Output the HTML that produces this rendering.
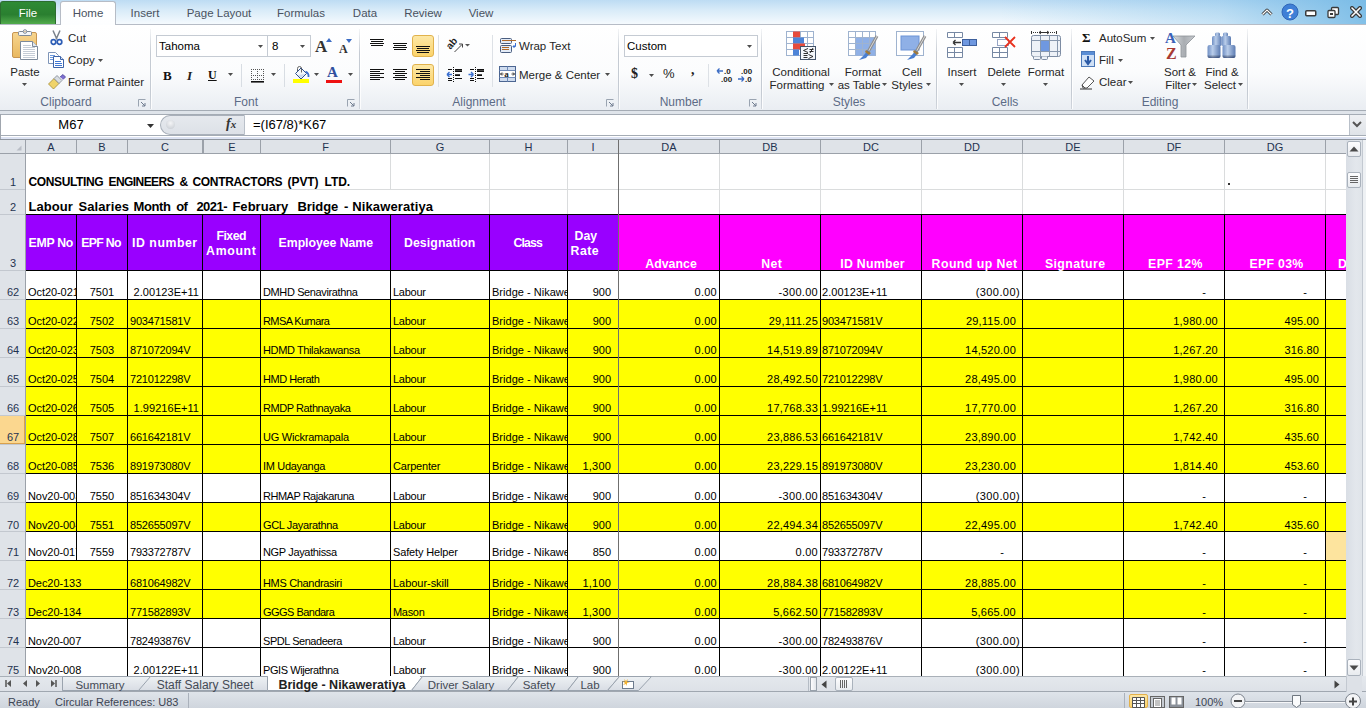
<!DOCTYPE html><html><head><meta charset="utf-8"><style>
html,body{margin:0;padding:0;width:1366px;height:708px;overflow:hidden;background:#fff;font-family:"Liberation Sans", sans-serif;}
div{position:absolute;box-sizing:border-box;}
.t{white-space:pre;}
svg{position:absolute;}

</style></head><body>
<div style="left:0px;top:0px;width:1366px;height:25px;background:linear-gradient(#bddcf3,#d8ebf8 40%,#f7fbfe)"></div>
<div style="left:1000px;top:0px;width:366px;height:24px;background:linear-gradient(90deg,rgba(120,188,232,0),rgba(120,188,232,0.35) 60%,rgba(110,182,228,0.85))"></div>
<div style="left:0px;top:1px;width:56px;height:24px;background:linear-gradient(#2e8b35,#2a7f30 55%,#56b04f);border:1px solid #2b6c2e;border-bottom:none;border-radius:3px 3px 0 0"></div>
<div class="t" style="left:0.0px;top:8px;width:56px;text-align:center;font-size:11.5px;line-height:11.5px;color:#fff;font-weight:normal;white-space:pre;">File</div>
<div style="left:0px;top:24px;width:1366px;height:1px;background:#b6bcc6"></div>
<div style="left:60px;top:1px;width:56px;height:24px;background:linear-gradient(#ffffff,#fdfeff);border:1px solid #b6bcc6;border-bottom:none;border-radius:3px 3px 0 0"></div>
<div class="t" style="left:60.0px;top:8px;width:56px;text-align:center;font-size:11.5px;line-height:11.5px;color:#4a5260;font-weight:normal;white-space:pre;">Home</div>
<div class="t" style="left:95.0px;top:8px;width:100px;text-align:center;font-size:11.5px;line-height:11.5px;color:#4a5260;font-weight:normal;white-space:pre;">Insert</div>
<div class="t" style="left:169.0px;top:8px;width:100px;text-align:center;font-size:11.5px;line-height:11.5px;color:#4a5260;font-weight:normal;white-space:pre;">Page Layout</div>
<div class="t" style="left:251.0px;top:8px;width:100px;text-align:center;font-size:11.5px;line-height:11.5px;color:#4a5260;font-weight:normal;white-space:pre;">Formulas</div>
<div class="t" style="left:315.0px;top:8px;width:100px;text-align:center;font-size:11.5px;line-height:11.5px;color:#4a5260;font-weight:normal;white-space:pre;">Data</div>
<div class="t" style="left:373.0px;top:8px;width:100px;text-align:center;font-size:11.5px;line-height:11.5px;color:#4a5260;font-weight:normal;white-space:pre;">Review</div>
<div class="t" style="left:431.0px;top:8px;width:100px;text-align:center;font-size:11.5px;line-height:11.5px;color:#4a5260;font-weight:normal;white-space:pre;">View</div>
<div style="left:0px;top:25px;width:1366px;height:86px;background:linear-gradient(#ffffff 0%,#fbfcfd 55%,#e9edf2 100%)"></div>
<div style="left:0px;top:110px;width:1366px;height:1px;background:#a5acb5"></div>
<div style="left:0px;top:111px;width:1366px;height:3px;background:#dfe4ea"></div>
<div style="left:150px;top:29px;width:1px;height:80px;background:linear-gradient(rgba(200,206,214,0.2),#c5cbd3 30%,#c5cbd3 80%,#d0d5dc)"></div>
<div style="left:151px;top:29px;width:1px;height:80px;background:rgba(255,255,255,0.8)"></div>
<div style="left:359px;top:29px;width:1px;height:80px;background:linear-gradient(rgba(200,206,214,0.2),#c5cbd3 30%,#c5cbd3 80%,#d0d5dc)"></div>
<div style="left:360px;top:29px;width:1px;height:80px;background:rgba(255,255,255,0.8)"></div>
<div style="left:618px;top:29px;width:1px;height:80px;background:linear-gradient(rgba(200,206,214,0.2),#c5cbd3 30%,#c5cbd3 80%,#d0d5dc)"></div>
<div style="left:619px;top:29px;width:1px;height:80px;background:rgba(255,255,255,0.8)"></div>
<div style="left:761px;top:29px;width:1px;height:80px;background:linear-gradient(rgba(200,206,214,0.2),#c5cbd3 30%,#c5cbd3 80%,#d0d5dc)"></div>
<div style="left:762px;top:29px;width:1px;height:80px;background:rgba(255,255,255,0.8)"></div>
<div style="left:936px;top:29px;width:1px;height:80px;background:linear-gradient(rgba(200,206,214,0.2),#c5cbd3 30%,#c5cbd3 80%,#d0d5dc)"></div>
<div style="left:937px;top:29px;width:1px;height:80px;background:rgba(255,255,255,0.8)"></div>
<div style="left:1071px;top:29px;width:1px;height:80px;background:linear-gradient(rgba(200,206,214,0.2),#c5cbd3 30%,#c5cbd3 80%,#d0d5dc)"></div>
<div style="left:1072px;top:29px;width:1px;height:80px;background:rgba(255,255,255,0.8)"></div>
<div style="left:1247px;top:29px;width:1px;height:80px;background:linear-gradient(rgba(200,206,214,0.2),#c5cbd3 30%,#c5cbd3 80%,#d0d5dc)"></div>
<div style="left:1248px;top:29px;width:1px;height:80px;background:rgba(255,255,255,0.8)"></div>
<div class="t" style="left:6.0px;top:96px;width:120px;text-align:center;font-size:12px;line-height:12px;color:#5c6b86;font-weight:normal;white-space:pre;">Clipboard</div>
<div class="t" style="left:186.0px;top:96px;width:120px;text-align:center;font-size:12px;line-height:12px;color:#5c6b86;font-weight:normal;white-space:pre;">Font</div>
<div class="t" style="left:419.0px;top:96px;width:120px;text-align:center;font-size:12px;line-height:12px;color:#5c6b86;font-weight:normal;white-space:pre;">Alignment</div>
<div class="t" style="left:621.0px;top:96px;width:120px;text-align:center;font-size:12px;line-height:12px;color:#5c6b86;font-weight:normal;white-space:pre;">Number</div>
<div class="t" style="left:789.0px;top:96px;width:120px;text-align:center;font-size:12px;line-height:12px;color:#5c6b86;font-weight:normal;white-space:pre;">Styles</div>
<div class="t" style="left:945.0px;top:96px;width:120px;text-align:center;font-size:12px;line-height:12px;color:#5c6b86;font-weight:normal;white-space:pre;">Cells</div>
<div class="t" style="left:1100.0px;top:96px;width:120px;text-align:center;font-size:12px;line-height:12px;color:#5c6b86;font-weight:normal;white-space:pre;">Editing</div>
<svg style="left:138px;top:99px" width="8" height="8"><path d="M0.5 7.5V0.5H7.5" stroke="#9aa4b1" fill="none"/><path d="M3 3L7 7M7 4V7H4" stroke="#6e7b8e" fill="none"/></svg>
<svg style="left:347px;top:99px" width="8" height="8"><path d="M0.5 7.5V0.5H7.5" stroke="#9aa4b1" fill="none"/><path d="M3 3L7 7M7 4V7H4" stroke="#6e7b8e" fill="none"/></svg>
<svg style="left:606px;top:99px" width="8" height="8"><path d="M0.5 7.5V0.5H7.5" stroke="#9aa4b1" fill="none"/><path d="M3 3L7 7M7 4V7H4" stroke="#6e7b8e" fill="none"/></svg>
<svg style="left:749px;top:99px" width="8" height="8"><path d="M0.5 7.5V0.5H7.5" stroke="#9aa4b1" fill="none"/><path d="M3 3L7 7M7 4V7H4" stroke="#6e7b8e" fill="none"/></svg>
<div class="t" style="left:-5.0px;top:67px;width:60px;text-align:center;font-size:11.5px;line-height:11.5px;color:#262626;font-weight:normal;white-space:pre;">Paste</div>
<div class="t" style="left:68px;top:33px;font-size:11.5px;line-height:11.5px;color:#262626;font-weight:normal;white-space:pre;">Cut</div>
<div class="t" style="left:68px;top:55px;font-size:11.5px;line-height:11.5px;color:#262626;font-weight:normal;white-space:pre;">Copy</div>
<div class="t" style="left:68px;top:77px;font-size:11.5px;line-height:11.5px;color:#262626;font-weight:normal;white-space:pre;">Format Painter</div>
<div style="left:156px;top:35px;width:112px;height:22px;background:#fff;border:1px solid #c5cbd3"></div>
<div style="left:267px;top:35px;width:44px;height:22px;background:#fff;border:1px solid #c5cbd3"></div>
<div class="t" style="left:159px;top:41px;font-size:11.5px;line-height:11.5px;color:#000;font-weight:normal;white-space:pre;">Tahoma</div>
<div class="t" style="left:272px;top:41px;font-size:11.5px;line-height:11.5px;color:#000;font-weight:normal;white-space:pre;">8</div>
<div style="left:624px;top:35px;width:134px;height:22px;background:#fff;border:1px solid #c5cbd3"></div>
<div class="t" style="left:627px;top:41px;font-size:11.5px;line-height:11.5px;color:#000;font-weight:normal;white-space:pre;">Custom</div>
<div class="t" style="left:519px;top:41px;font-size:11.5px;line-height:11.5px;color:#262626;font-weight:normal;white-space:pre;">Wrap Text</div>
<div class="t" style="left:519px;top:70px;font-size:11.5px;line-height:11.5px;color:#262626;font-weight:normal;white-space:pre;">Merge &amp; Center</div>
<div class="t" style="left:761.0px;top:67px;width:80px;text-align:center;font-size:11.5px;line-height:11.5px;color:#262626;font-weight:normal;white-space:pre;">Conditional</div>
<div class="t" style="left:757.0px;top:80px;width:80px;text-align:center;font-size:11.5px;line-height:11.5px;color:#262626;font-weight:normal;white-space:pre;">Formatting</div>
<div class="t" style="left:823.0px;top:67px;width:80px;text-align:center;font-size:11.5px;line-height:11.5px;color:#262626;font-weight:normal;white-space:pre;">Format</div>
<div class="t" style="left:819.0px;top:80px;width:80px;text-align:center;font-size:11.5px;line-height:11.5px;color:#262626;font-weight:normal;white-space:pre;">as Table</div>
<div class="t" style="left:872.0px;top:67px;width:80px;text-align:center;font-size:11.5px;line-height:11.5px;color:#262626;font-weight:normal;white-space:pre;">Cell</div>
<div class="t" style="left:867.0px;top:80px;width:80px;text-align:center;font-size:11.5px;line-height:11.5px;color:#262626;font-weight:normal;white-space:pre;">Styles</div>
<div class="t" style="left:932.0px;top:67px;width:60px;text-align:center;font-size:11.5px;line-height:11.5px;color:#262626;font-weight:normal;white-space:pre;">Insert</div>
<div class="t" style="left:974.0px;top:67px;width:60px;text-align:center;font-size:11.5px;line-height:11.5px;color:#262626;font-weight:normal;white-space:pre;">Delete</div>
<div class="t" style="left:1016.0px;top:67px;width:60px;text-align:center;font-size:11.5px;line-height:11.5px;color:#262626;font-weight:normal;white-space:pre;">Format</div>
<div class="t" style="left:1099px;top:33px;font-size:11.5px;line-height:11.5px;color:#262626;font-weight:normal;white-space:pre;">AutoSum</div>
<div class="t" style="left:1099px;top:55px;font-size:11.5px;line-height:11.5px;color:#262626;font-weight:normal;white-space:pre;">Fill</div>
<div class="t" style="left:1099px;top:77px;font-size:11.5px;line-height:11.5px;color:#262626;font-weight:normal;white-space:pre;">Clear</div>
<div class="t" style="left:1150.0px;top:67px;width:60px;text-align:center;font-size:11.5px;line-height:11.5px;color:#262626;font-weight:normal;white-space:pre;">Sort &amp;</div>
<div class="t" style="left:1148.0px;top:80px;width:60px;text-align:center;font-size:11.5px;line-height:11.5px;color:#262626;font-weight:normal;white-space:pre;">Filter</div>
<div class="t" style="left:1192.0px;top:67px;width:60px;text-align:center;font-size:11.5px;line-height:11.5px;color:#262626;font-weight:normal;white-space:pre;">Find &amp;</div>
<div class="t" style="left:1190.0px;top:80px;width:60px;text-align:center;font-size:11.5px;line-height:11.5px;color:#262626;font-weight:normal;white-space:pre;">Select</div>
<svg style="left:11px;top:29px" width="30" height="33" viewBox="0 0 30 33">
<defs><linearGradient id="cb" x1="0" y1="0" x2="0" y2="1"><stop offset="0" stop-color="#f7d58f"/><stop offset="1" stop-color="#e9b85f"/></linearGradient></defs>
<rect x="1.5" y="3.5" width="24" height="25" rx="1.5" fill="url(#cb)" stroke="#c79552"/>
<rect x="7.5" y="2.5" width="13" height="4" rx="1" fill="#f4f6f8" stroke="#7e8996"/>
<circle cx="14" cy="2.5" r="1.8" fill="#f4f6f8" stroke="#7e8996"/>
<circle cx="14" cy="2.5" r="0.6" fill="#c48a3a"/>
<path d="M9.5 12.5H21.5L26.5 17.5V30.5H9.5Z" fill="#fff" stroke="#7d8a9b"/>
<path d="M21.5 12.5V17.5H26.5" fill="#e3e8ee" stroke="#7d8a9b"/>
<path d="M12 16.5H20M12 18.5H24M12 20.5H24M12 22.5H24M12 24.5H24M12 26.5H24M12 28.5H24" stroke="#c5ccd6"/>
</svg>
<svg style="left:22px;top:83px" width="6" height="4"><path d="M0 0H5L2.5 3Z" fill="#4d4d4d"/></svg>
<svg style="left:50px;top:30px" width="13" height="16" viewBox="0 0 13 16">
<path d="M3 0.5L7 9.5M10 0.5L6 9.5" stroke="#7a828b" stroke-width="1.5"/>
<circle cx="3.5" cy="12" r="2.3" fill="none" stroke="#2d5db5" stroke-width="1.7"/>
<circle cx="9.5" cy="12" r="2.3" fill="none" stroke="#2d5db5" stroke-width="1.7"/>
</svg>
<svg style="left:48px;top:52px" width="17" height="16" viewBox="0 0 17 16">
<path d="M0.5 0.5H7.5L10.5 3.5V11.5H0.5Z" fill="#fff" stroke="#7e95b8"/>
<path d="M2 3.5H7M2 5.5H8M2 7.5H8" stroke="#6c98dc"/>
<path d="M5.5 4.5H12.5L15.5 7.5V15.5H5.5Z" fill="#fff" stroke="#3c63a8"/>
<path d="M12.5 4.5V7.5H15.5" fill="#dbe4f0" stroke="#3c63a8"/>
<path d="M7 9.5H13M7 11.5H14M7 13.5H14" stroke="#3f77d4"/>
</svg>
<svg style="left:98px;top:59px" width="6" height="4"><path d="M0 0H5L2.5 3Z" fill="#4d4d4d"/></svg>
<svg style="left:48px;top:74px" width="18" height="16" viewBox="0 0 18 16">
<path d="M0.5 10L6 4.5L11 9.5L5.5 15Z" fill="#efd36a" stroke="#a38a35" stroke-width="0.8"/>
<path d="M6 4.5L9 1.5L14 6.5L11 9.5Z" fill="#d8dde3" stroke="#7b838d" stroke-width="0.8"/>
<path d="M12 3L15 0.5L17.5 3L15 5.5" fill="#7d6fd0" stroke="#4d4499" stroke-width="0.8"/>
</svg>
<div class="t" style="left:315px;top:38px;font-family:'Liberation Serif',serif;font-size:17px;line-height:17px;font-weight:bold;font-style:normal;color:#333;">A</div>
<svg style="left:326px;top:38px" width="6" height="4" viewBox="0 0 6 4"><path d="M0 4H6L3 0Z" fill="#3b6cc4"/></svg>
<div class="t" style="left:339px;top:43px;font-family:'Liberation Serif',serif;font-size:12px;line-height:12px;font-weight:bold;font-style:normal;color:#333;">A</div>
<svg style="left:346px;top:39px" width="6" height="4" viewBox="0 0 6 4"><path d="M0 0H6L3 4Z" fill="#3b6cc4"/></svg>
<div class="t" style="left:163px;top:69px;font-family:'Liberation Serif',serif;font-size:13px;line-height:13px;font-weight:bold;font-style:normal;color:#111;">B</div>
<div class="t" style="left:187px;top:69px;font-family:'Liberation Serif',serif;font-size:13px;line-height:13px;font-weight:bold;font-style:italic;color:#222;">I</div>
<div class="t" style="left:208px;top:69px;font-family:'Liberation Serif',serif;font-size:12px;line-height:12px;font-weight:bold;font-style:normal;color:#111;text-decoration:underline">U</div>
<svg style="left:228px;top:73px" width="6" height="4"><path d="M0 0H5L2.5 3Z" fill="#4d4d4d"/></svg>
<div style="left:241px;top:64px;width:1px;height:23px;background:#d8dde3"></div>
<svg style="left:251px;top:69px" width="14" height="14" viewBox="0 0 14 14"><rect x="0" y="0" width="1" height="1" fill="#555"/><rect x="2" y="0" width="1" height="1" fill="#555"/><rect x="4" y="0" width="1" height="1" fill="#555"/><rect x="6" y="0" width="1" height="1" fill="#555"/><rect x="8" y="0" width="1" height="1" fill="#555"/><rect x="10" y="0" width="1" height="1" fill="#555"/><rect x="12" y="0" width="1" height="1" fill="#555"/><rect x="0" y="2" width="1" height="1" fill="#555"/><rect x="6" y="2" width="1" height="1" fill="#555"/><rect x="12" y="2" width="1" height="1" fill="#555"/><rect x="0" y="4" width="1" height="1" fill="#555"/><rect x="6" y="4" width="1" height="1" fill="#555"/><rect x="12" y="4" width="1" height="1" fill="#555"/><rect x="0" y="6" width="1" height="1" fill="#555"/><rect x="2" y="6" width="1" height="1" fill="#555"/><rect x="4" y="6" width="1" height="1" fill="#555"/><rect x="6" y="6" width="1" height="1" fill="#555"/><rect x="8" y="6" width="1" height="1" fill="#555"/><rect x="10" y="6" width="1" height="1" fill="#555"/><rect x="12" y="6" width="1" height="1" fill="#555"/><rect x="0" y="8" width="1" height="1" fill="#555"/><rect x="6" y="8" width="1" height="1" fill="#555"/><rect x="12" y="8" width="1" height="1" fill="#555"/><rect x="0" y="10" width="1" height="1" fill="#555"/><rect x="2" y="10" width="1" height="1" fill="#555"/><rect x="4" y="10" width="1" height="1" fill="#555"/><rect x="6" y="10" width="1" height="1" fill="#555"/><rect x="8" y="10" width="1" height="1" fill="#555"/><rect x="10" y="10" width="1" height="1" fill="#555"/><rect x="12" y="10" width="1" height="1" fill="#555"/><rect x="0" y="12" width="13" height="1.6" fill="#111"/></svg>
<svg style="left:271px;top:73px" width="6" height="4"><path d="M0 0H5L2.5 3Z" fill="#4d4d4d"/></svg>
<div style="left:284px;top:64px;width:1px;height:23px;background:#d8dde3"></div>
<svg style="left:292px;top:66px" width="18" height="18" viewBox="0 0 18 18"><path d="M3.5 7.5L9 2L14.5 7.5L9 13Z" fill="#f4f7fb" stroke="#2c4f8c"/><path d="M6 9L9 12L13 8Z" fill="#c9d8ee"/><path d="M9.5 6.5V2.5A2 2 0 0 0 5.5 2.5V5" stroke="#555" fill="none" stroke-width="0.9"/><path d="M13.5 5.5Q17 7 16.5 11" stroke="#3b6fd0" stroke-width="1.8" fill="none"/><rect x="1" y="13" width="16" height="4" fill="#ffff00"/></svg>
<svg style="left:314px;top:73px" width="6" height="4"><path d="M0 0H5L2.5 3Z" fill="#4d4d4d"/></svg>
<div class="t" style="left:327px;top:65px;font-family:'Liberation Serif',serif;font-size:15px;line-height:15px;font-weight:bold;font-style:normal;color:#2e4f9e;">A</div>
<div style="left:326px;top:80px;width:16px;height:3px;background:#ee1111"></div>
<svg style="left:348px;top:73px" width="6" height="4"><path d="M0 0H5L2.5 3Z" fill="#4d4d4d"/></svg>
<div style="left:412px;top:35px;width:22px;height:22px;background:linear-gradient(#fde8a6,#fbd36b);border:1px solid #e1b24c;border-radius:3px"></div>
<div style="left:412px;top:64px;width:22px;height:22px;background:linear-gradient(#fde8a6,#fbd36b);border:1px solid #e1b24c;border-radius:3px"></div>
<svg style="left:370px;top:39px" width="16" height="9" viewBox="0 0 16 9"><rect x="0" y="0" width="14" height="1" fill="#111"/><rect x="1" y="2" width="12" height="1" fill="#111"/><rect x="0" y="4" width="14" height="1" fill="#111"/><rect x="1" y="6" width="12" height="1" fill="#111"/></svg>
<svg style="left:393px;top:43px" width="16" height="9" viewBox="0 0 16 9"><rect x="0" y="0" width="14" height="1" fill="#111"/><rect x="1" y="2" width="12" height="1" fill="#111"/><rect x="0" y="4" width="14" height="1" fill="#111"/><rect x="1" y="6" width="12" height="1" fill="#111"/></svg>
<svg style="left:416px;top:46px" width="16" height="9" viewBox="0 0 16 9"><rect x="0" y="0" width="14" height="1" fill="#111"/><rect x="1" y="2" width="12" height="1" fill="#111"/><rect x="0" y="4" width="14" height="1" fill="#111"/><rect x="1" y="6" width="12" height="1" fill="#111"/></svg>
<svg style="left:370px;top:69px" width="16" height="13" viewBox="0 0 16 13"><rect x="0" y="0" width="14" height="1" fill="#111"/><rect x="0" y="2" width="10" height="1" fill="#111"/><rect x="0" y="4" width="14" height="1" fill="#111"/><rect x="0" y="6" width="10" height="1" fill="#111"/><rect x="0" y="8" width="14" height="1" fill="#111"/><rect x="0" y="10" width="10" height="1" fill="#111"/></svg>
<svg style="left:393px;top:69px" width="16" height="13" viewBox="0 0 16 13"><rect x="0" y="0" width="14" height="1" fill="#111"/><rect x="2" y="2" width="10" height="1" fill="#111"/><rect x="0" y="4" width="14" height="1" fill="#111"/><rect x="2" y="6" width="10" height="1" fill="#111"/><rect x="0" y="8" width="14" height="1" fill="#111"/><rect x="2" y="10" width="10" height="1" fill="#111"/></svg>
<svg style="left:416px;top:69px" width="16" height="13" viewBox="0 0 16 13"><rect x="0" y="0" width="14" height="1" fill="#111"/><rect x="4" y="2" width="10" height="1" fill="#111"/><rect x="0" y="4" width="14" height="1" fill="#111"/><rect x="4" y="6" width="10" height="1" fill="#111"/><rect x="0" y="8" width="14" height="1" fill="#111"/><rect x="4" y="10" width="10" height="1" fill="#111"/></svg>
<div style="left:438px;top:35px;width:1px;height:52px;background:#dde1e6"></div>
<svg style="left:446px;top:36px" width="26" height="18" viewBox="0 0 26 18"><text x="0" y="0" font-family="Liberation Sans" font-size="10" font-weight="bold" fill="#222" transform="translate(4.5 14) rotate(-50)">ab</text><path d="M8.5 16L16 8.5" stroke="#444" stroke-width="1"/><path d="M13 8H16.5V11.5" stroke="#444" fill="none"/><path d="M19 8H24L21.5 10.5Z" fill="#555"/></svg>
<svg style="left:446px;top:67px" width="18" height="16" viewBox="0 0 18 16"><path d="M7.5 0V15" stroke="#111" stroke-dasharray="1 1"/><path d="M2 2.5H6M9 2.5H16M9 4.5H16M9 8.5H14M9 11.5H16M2 11.5H6M2 13.5H6" stroke="#111"/><path d="M9 4H16M9 8H14" stroke="#111" stroke-width="1.5"/><path d="M1 7.5H6M1 7.5L3.5 5M1 7.5L3.5 10" stroke="#3a6fd0" stroke-width="1.4" fill="none"/></svg>
<svg style="left:468px;top:67px" width="18" height="16" viewBox="0 0 18 16"><path d="M7.5 0V15" stroke="#111" stroke-dasharray="1 1"/><path d="M2 2.5H6M9 2.5H16M9 4.5H16M9 8.5H14M9 11.5H16M2 11.5H6M2 13.5H6" stroke="#111"/><path d="M9 4H16M9 8H14" stroke="#111" stroke-width="1.5"/><path d="M0.5 7.5H5.5M5.5 7.5L3 5M5.5 7.5L3 10" stroke="#3a6fd0" stroke-width="1.4" fill="none"/></svg>
<div style="left:492px;top:35px;width:1px;height:52px;background:#dde1e6"></div>
<svg style="left:499px;top:37px" width="19" height="17" viewBox="0 0 19 17"><rect x="1.5" y="1.5" width="11" height="5" rx="1" fill="#e4ecf7" stroke="#4a5e80"/><rect x="1.5" y="8.5" width="11" height="7" rx="1" fill="#e4ecf7" stroke="#4a5e80"/><path d="M3 3.5H17" stroke="#b06a2a"/><path d="M3 10.5H10M3 12.5H10" stroke="#b06a2a"/><path d="M16.5 6V9.5H14M14 9.5L15.5 8M14 9.5L15.5 11" stroke="#3a6fd0" fill="none"/></svg>
<svg style="left:499px;top:66px" width="18" height="17" viewBox="0 0 18 17"><rect x="0.5" y="0.5" width="16" height="15" fill="#cfdcef" stroke="#4b6591"/><path d="M8.5 0.5V4.5M8.5 11.5V15.5M0.5 4.5H16.5M0.5 11.5H16.5" stroke="#6f8bb8"/><rect x="1" y="5" width="15" height="6" fill="#fff"/><text x="5.2" y="11" font-family="Liberation Serif" font-size="9" font-weight="bold" fill="#222">a</text><path d="M1.5 8H4.5M15.5 8H12.5M3 6.5L1.5 8L3 9.5M14 6.5L15.5 8L14 9.5" stroke="#222" stroke-width="0.9" fill="none"/></svg>
<svg style="left:605px;top:73px" width="6" height="4"><path d="M0 0H5L2.5 3Z" fill="#4d4d4d"/></svg>
<svg style="left:747px;top:45px" width="6" height="4"><path d="M0 0H5L2.5 3Z" fill="#4d4d4d"/></svg>
<svg style="left:258px;top:45px" width="6" height="4"><path d="M0 0H5L2.5 3Z" fill="#4d4d4d"/></svg>
<svg style="left:300px;top:45px" width="6" height="4"><path d="M0 0H5L2.5 3Z" fill="#4d4d4d"/></svg>
<div class="t" style="left:631px;top:67px;font-family:'Liberation Serif',serif;font-size:14px;line-height:14px;font-weight:bold;font-style:normal;color:#222;">$</div>
<svg style="left:649px;top:74px" width="6" height="4"><path d="M0 0H5L2.5 3Z" fill="#4d4d4d"/></svg>
<div class="t" style="left:663px;top:67px;font-family:'Liberation Sans',sans-serif;font-size:13px;line-height:13px;font-weight:normal;font-style:normal;color:#222;">%</div>
<div class="t" style="left:691px;top:63px;font-family:'Liberation Serif',serif;font-size:14px;line-height:14px;font-weight:bold;font-style:normal;color:#222;">,</div>
<div style="left:708px;top:64px;width:1px;height:23px;background:#dde1e6"></div>
<svg style="left:716px;top:66px" width="18" height="17" viewBox="0 0 18 17"><path d="M1 5H7M1 5L3.5 2.5M1 5L3.5 7.5" stroke="#3b6cc4" stroke-width="1.3" fill="none"/><text x="8" y="8" font-family="Liberation Sans" font-size="8" font-weight="bold" fill="#222">.0</text><text x="5" y="16" font-family="Liberation Sans" font-size="8" font-weight="bold" fill="#222">.00</text></svg>
<svg style="left:738px;top:66px" width="18" height="17" viewBox="0 0 18 17"><text x="3" y="8" font-family="Liberation Sans" font-size="8" font-weight="bold" fill="#222">.00</text><path d="M0 13H6M6 13L3.5 10.5M6 13L3.5 15.5" stroke="#3b6cc4" stroke-width="1.3" fill="none"/><text x="7" y="16" font-family="Liberation Sans" font-size="8" font-weight="bold" fill="#222">.0</text></svg>
<svg style="left:786px;top:31px" width="31" height="30" viewBox="0 0 31 30">
<rect x="0.5" y="0.5" width="27" height="24" fill="#fff" stroke="#9fb3cf"/>
<path d="M7.5 0.5V24.5M14.5 0.5V24.5M21.5 0.5V24.5M0.5 6.5H27.5M0.5 12.5H27.5M0.5 18.5H27.5" stroke="#9fb3cf"/>
<rect x="7" y="0.5" width="7" height="6" fill="#e64b3c"/><rect x="7" y="6.5" width="11" height="6" fill="#4d84d8"/>
<rect x="7" y="12.5" width="12" height="6" fill="#e64b3c"/><rect x="7" y="18.5" width="6" height="6" fill="#4d84d8"/>
<rect x="14.5" y="15.5" width="15" height="13" fill="#f4f7fb" stroke="#44546a"/>
<path d="M22 17.5L17.5 19.5L22 21.5M17.5 22.5H22M23.5 18.5H27.5M23.5 20.5H27.5M27 17L24 22M17.5 24.5H21.5M17.5 26.5H21.5M22.5 23.5L27 25.5L22.5 27.5" stroke="#1a1a1a" stroke-width="0.9" fill="none"/>
</svg>
<svg style="left:848px;top:31px" width="31" height="30" viewBox="0 0 31 30">
<rect x="0.5" y="0.5" width="27" height="24" fill="#fff" stroke="#9fb3cf"/>
<rect x="7" y="6.5" width="20" height="18" fill="#8fb0e6"/>
<path d="M7.5 0.5V24.5M14.5 0.5V24.5M21.5 0.5V24.5M0.5 6.5H27.5M0.5 12.5H27.5M0.5 18.5H27.5" stroke="#9fb3cf"/>
<path d="M29 5L20 21" stroke="#8e8e8e" stroke-width="3"/><path d="M29 5L20 21" stroke="#d8d8d8" stroke-width="1"/>
<path d="M20 19L16 24L11 29L18 27L22 22Z" fill="#4a7fd0"/><path d="M18 19L23 22L21 24L17 21Z" fill="#a07a3a"/>
</svg>
<svg style="left:896px;top:31px" width="31" height="30" viewBox="0 0 31 30">
<rect x="0.5" y="0.5" width="27" height="24" fill="#fff" stroke="#9fb3cf"/>
<rect x="5" y="5" width="18" height="14" fill="#8fb0e6" stroke="#6c94d6"/>
<path d="M29 5L20 21" stroke="#8e8e8e" stroke-width="3"/><path d="M29 5L20 21" stroke="#d8d8d8" stroke-width="1"/>
<path d="M20 19L16 24L11 29L18 27L22 22Z" fill="#4a7fd0"/><path d="M18 19L23 22L21 24L17 21Z" fill="#a07a3a"/>
</svg>
<svg style="left:829px;top:83px" width="6" height="4"><path d="M0 0H5L2.5 3Z" fill="#4d4d4d"/></svg>
<svg style="left:882px;top:83px" width="6" height="4"><path d="M0 0H5L2.5 3Z" fill="#4d4d4d"/></svg>
<svg style="left:926px;top:83px" width="6" height="4"><path d="M0 0H5L2.5 3Z" fill="#4d4d4d"/></svg>
<svg style="left:946px;top:31px" width="32" height="28" viewBox="0 0 32 28">
<path d="M1.5 1.5H16.5V6.5H1.5Z M8.5 1.5V6.5" fill="#fff" stroke="#7688a3"/>
<rect x="16.5" y="8.5" width="14" height="6" fill="#6f98e0" stroke="#3d5f9c"/><path d="M23.5 8.5V14.5" stroke="#3d5f9c"/>
<path d="M7 11.5H15M7 11.5L9.5 9M7 11.5L9.5 14" stroke="#333" fill="none" stroke-width="1.3"/>
<path d="M1.5 16.5H16.5V26.5H1.5Z M8.5 16.5V26.5 M1.5 21.5H16.5" fill="#fff" stroke="#7688a3"/>
</svg>
<svg style="left:991px;top:31px" width="28" height="28" viewBox="0 0 28 28">
<path d="M1.5 1.5H16.5V6.5H1.5Z M8.5 1.5V6.5" fill="#fff" stroke="#7688a3"/>
<path d="M6.5 8.5H17.5V14.5H6.5Z" fill="none" stroke="#2d4a8a" stroke-dasharray="1 1"/>
<path d="M1.5 16.5H16.5V26.5H1.5Z M8.5 16.5V26.5 M1.5 21.5H16.5" fill="#fff" stroke="#7688a3"/>
<path d="M14 6L24 16M24 6L14 16" stroke="#e8321f" stroke-width="1.8"/>
</svg>
<svg style="left:1030px;top:30px" width="32" height="31" viewBox="0 0 32 31">
<path d="M1.5 1V4M26.5 1V4" stroke="#333"/><path d="M3 2.5H9M20 2.5H26" stroke="#333" stroke-dasharray="1 1"/>
<path d="M9 2.5H19M9 2.5L11 1M9 2.5L11 4M19 2.5L17 1M19 2.5L17 4" stroke="#333" fill="none"/>
<rect x="1.5" y="5.5" width="29" height="21" rx="2" fill="#eef2f8" stroke="#7d8ca3"/>
<path d="M10.5 5.5V26.5M19.5 5.5V26.5M27.5 5.5V26.5M1.5 10.5H30.5M1.5 21.5H30.5" stroke="#8797ad"/>
<rect x="11" y="11" width="8" height="10" fill="#6f98e0"/>
<path d="M3.5 26.5V28.5Q3.5 29.5 4.5 29.5H9.5Q10.5 29.5 10.5 28.5V26.5M11.5 26.5V28.5Q11.5 29.5 12.5 29.5H16.5Q17.5 29.5 17.5 28.5V26.5" fill="#eef2f8" stroke="#7d8ca3"/>
</svg>
<svg style="left:959px;top:83px" width="6" height="4"><path d="M0 0H5L2.5 3Z" fill="#4d4d4d"/></svg>
<svg style="left:1001px;top:83px" width="6" height="4"><path d="M0 0H5L2.5 3Z" fill="#4d4d4d"/></svg>
<svg style="left:1043px;top:83px" width="6" height="4"><path d="M0 0H5L2.5 3Z" fill="#4d4d4d"/></svg>
<div class="t" style="left:1082px;top:31px;font-family:'Liberation Serif',serif;font-size:13px;line-height:13px;font-weight:bold;font-style:normal;color:#111;">&#931;</div>
<svg style="left:1150px;top:37px" width="6" height="4"><path d="M0 0H5L2.5 3Z" fill="#4d4d4d"/></svg>
<svg style="left:1081px;top:51px" width="15" height="17" viewBox="0 0 15 17"><rect x="0.5" y="0.5" width="13" height="15" fill="#cfe0f6" stroke="#4b78b8"/><rect x="1" y="1" width="12" height="3" fill="#5a8ed6"/><path d="M7 5V12M4 9L7 13L10 9" stroke="#2b5aa6" stroke-width="2" fill="none"/></svg>
<svg style="left:1118px;top:59px" width="6" height="4"><path d="M0 0H5L2.5 3Z" fill="#4d4d4d"/></svg>
<svg style="left:1080px;top:74px" width="16" height="16" viewBox="0 0 16 16"><path d="M2 11L9 3L14 7L7 14H3Z" fill="#fff" stroke="#555"/><path d="M2 11L5 14" stroke="#555"/><path d="M0 15H12" stroke="#333"/></svg>
<svg style="left:1128px;top:81px" width="6" height="4"><path d="M0 0H5L2.5 3Z" fill="#4d4d4d"/></svg>
<svg style="left:1164px;top:30px" width="34" height="30" viewBox="0 0 34 30">
<defs><linearGradient id="fn" x1="0" y1="0" x2="1" y2="0"><stop offset="0" stop-color="#d9dcdf"/><stop offset="0.5" stop-color="#a9adb2"/><stop offset="1" stop-color="#c8cbcf"/></linearGradient></defs>
<path d="M9 6H31L22 15V27H17V15Z" fill="url(#fn)" stroke="#8d9298" stroke-width="0.8"/>
<text x="1" y="13" font-family="Liberation Serif" font-size="15" font-weight="bold" fill="#3b62b8">A</text>
<text x="2" y="28.5" font-family="Liberation Serif" font-size="16" font-weight="bold" fill="#a83a32">Z</text>
</svg>
<svg style="left:1192px;top:83px" width="6" height="4"><path d="M0 0H5L2.5 3Z" fill="#4d4d4d"/></svg>
<svg style="left:1207px;top:32px" width="30" height="27" viewBox="0 0 30 27">
<defs><linearGradient id="bn" x1="0" y1="0" x2="1" y2="0"><stop offset="0" stop-color="#6f8fc4"/><stop offset="0.4" stop-color="#b9cdea"/><stop offset="1" stop-color="#5b7bb2"/></linearGradient>
<linearGradient id="bv" x1="0" y1="0" x2="0" y2="1"><stop offset="0.75" stop-color="rgba(0,0,0,0)"/><stop offset="1" stop-color="rgba(20,40,90,0.6)"/></linearGradient></defs>
<rect x="8" y="0.5" width="5" height="4" rx="1.5" fill="url(#bn)"/><rect x="16" y="0.5" width="5" height="4" rx="1.5" fill="url(#bn)"/>
<rect x="5" y="4" width="9.5" height="10" rx="1.5" fill="url(#bn)"/><rect x="14.5" y="4" width="9.5" height="10" rx="1.5" fill="url(#bn)"/>
<rect x="0.5" y="13" width="13" height="13" rx="2" fill="url(#bn)"/><rect x="15.5" y="13" width="13" height="13" rx="2" fill="url(#bn)"/>
<rect x="0.5" y="13" width="13" height="13" rx="2" fill="url(#bv)"/><rect x="15.5" y="13" width="13" height="13" rx="2" fill="url(#bv)"/>
</svg>
<svg style="left:1238px;top:83px" width="6" height="4"><path d="M0 0H5L2.5 3Z" fill="#4d4d4d"/></svg>
<svg style="left:1261px;top:8px" width="12" height="9" viewBox="0 0 12 9"><path d="M1.5 6.5L6 2L10.5 6.5" stroke="#3a3a3a" stroke-width="3" fill="none" stroke-linejoin="round"/><path d="M1.5 6.5L6 2L10.5 6.5" stroke="#fff" stroke-width="1.2" fill="none"/></svg>
<svg style="left:1281px;top:3px" width="18" height="18" viewBox="0 0 18 18"><circle cx="9" cy="9" r="8" fill="#3f7fd6" stroke="#2f66b8"/><text x="9" y="14.5" text-anchor="middle" font-family="Liberation Sans" font-size="13" font-weight="bold" fill="#fff">?</text></svg>
<svg style="left:1305px;top:10px" width="12" height="7" viewBox="0 0 12 7"><rect x="0.75" y="0.75" width="10" height="5" rx="1" fill="#fff" stroke="#3a3a3a" stroke-width="1.5"/></svg>
<svg style="left:1327px;top:6px" width="13" height="13" viewBox="0 0 13 13"><rect x="4.5" y="1.5" width="7" height="7" rx="1" fill="#fff" stroke="#3a3a3a" stroke-width="1.3"/><rect x="1" y="4.5" width="7" height="7" rx="1" fill="#fff" stroke="#3a3a3a" stroke-width="1.3"/><rect x="3" y="7" width="3" height="2" fill="#3a3a3a"/></svg>
<svg style="left:1350px;top:6px" width="12" height="12" viewBox="0 0 12 12"><path d="M2 2L10 10M10 2L2 10" stroke="#3a3a3a" stroke-width="4" stroke-linecap="round"/><path d="M2 2L10 10M10 2L2 10" stroke="#fff" stroke-width="1.6" stroke-linecap="round"/></svg>
<div style="left:0px;top:114px;width:1366px;height:22px;background:#fff;border-top:1px solid #a5acb5;border-bottom:1px solid #a5acb5"></div>
<div class="t" style="left:31.0px;top:118px;width:80px;text-align:center;font-size:13px;line-height:13px;color:#000;font-weight:normal;white-space:pre;">M67</div>
<div class="t" style="left:253px;top:118px;font-size:13px;line-height:13px;color:#000;font-weight:normal;white-space:pre;">=(I67/8)*K67</div>
<div style="left:0px;top:136px;width:1366px;height:3px;background:linear-gradient(#ffffff 33%,#dde3f3 33%)"></div>
<div style="left:0px;top:114px;width:1px;height:39px;background:#a0a6ae"></div>
<div style="left:0px;top:139px;width:1366px;height:1px;background:#8e959e"></div>
<div style="left:0px;top:140px;width:1346px;height:536px;background:#fff"></div>
<div style="left:0px;top:140px;width:1346px;height:13px;background:#dfe3e8"></div>
<div style="left:0px;top:153px;width:1346px;height:1px;background:#9ba1a9"></div>
<div style="left:76px;top:140px;width:1px;height:13px;background:#9ba1a9"></div>
<div class="t" style="left:21.0px;top:142px;width:60px;text-align:center;font-size:11px;line-height:11px;color:#1f3350;font-weight:normal;white-space:pre;">A</div>
<div style="left:127px;top:140px;width:1px;height:13px;background:#9ba1a9"></div>
<div class="t" style="left:72.0px;top:142px;width:60px;text-align:center;font-size:11px;line-height:11px;color:#1f3350;font-weight:normal;white-space:pre;">B</div>
<div style="left:202px;top:140px;width:1px;height:13px;background:#9ba1a9"></div>
<div class="t" style="left:135.0px;top:142px;width:60px;text-align:center;font-size:11px;line-height:11px;color:#1f3350;font-weight:normal;white-space:pre;">C</div>
<div style="left:260px;top:140px;width:1px;height:13px;background:#9ba1a9"></div>
<div class="t" style="left:202.0px;top:142px;width:60px;text-align:center;font-size:11px;line-height:11px;color:#1f3350;font-weight:normal;white-space:pre;">E</div>
<div style="left:390px;top:140px;width:1px;height:13px;background:#9ba1a9"></div>
<div class="t" style="left:295.5px;top:142px;width:60px;text-align:center;font-size:11px;line-height:11px;color:#1f3350;font-weight:normal;white-space:pre;">F</div>
<div style="left:489px;top:140px;width:1px;height:13px;background:#9ba1a9"></div>
<div class="t" style="left:410.0px;top:142px;width:60px;text-align:center;font-size:11px;line-height:11px;color:#1f3350;font-weight:normal;white-space:pre;">G</div>
<div style="left:567px;top:140px;width:1px;height:13px;background:#9ba1a9"></div>
<div class="t" style="left:498.5px;top:142px;width:60px;text-align:center;font-size:11px;line-height:11px;color:#1f3350;font-weight:normal;white-space:pre;">H</div>
<div style="left:618px;top:140px;width:1px;height:13px;background:#9ba1a9"></div>
<div class="t" style="left:563.0px;top:142px;width:60px;text-align:center;font-size:11px;line-height:11px;color:#1f3350;font-weight:normal;white-space:pre;">I</div>
<div style="left:719px;top:140px;width:1px;height:13px;background:#9ba1a9"></div>
<div class="t" style="left:639.0px;top:142px;width:60px;text-align:center;font-size:11px;line-height:11px;color:#1f3350;font-weight:normal;white-space:pre;">DA</div>
<div style="left:820px;top:140px;width:1px;height:13px;background:#9ba1a9"></div>
<div class="t" style="left:740.0px;top:142px;width:60px;text-align:center;font-size:11px;line-height:11px;color:#1f3350;font-weight:normal;white-space:pre;">DB</div>
<div style="left:921px;top:140px;width:1px;height:13px;background:#9ba1a9"></div>
<div class="t" style="left:841.0px;top:142px;width:60px;text-align:center;font-size:11px;line-height:11px;color:#1f3350;font-weight:normal;white-space:pre;">DC</div>
<div style="left:1022px;top:140px;width:1px;height:13px;background:#9ba1a9"></div>
<div class="t" style="left:942.0px;top:142px;width:60px;text-align:center;font-size:11px;line-height:11px;color:#1f3350;font-weight:normal;white-space:pre;">DD</div>
<div style="left:1123px;top:140px;width:1px;height:13px;background:#9ba1a9"></div>
<div class="t" style="left:1043.0px;top:142px;width:60px;text-align:center;font-size:11px;line-height:11px;color:#1f3350;font-weight:normal;white-space:pre;">DE</div>
<div style="left:1224px;top:140px;width:1px;height:13px;background:#9ba1a9"></div>
<div class="t" style="left:1144.0px;top:142px;width:60px;text-align:center;font-size:11px;line-height:11px;color:#1f3350;font-weight:normal;white-space:pre;">DF</div>
<div style="left:1325px;top:140px;width:1px;height:13px;background:#9ba1a9"></div>
<div class="t" style="left:1245.0px;top:142px;width:60px;text-align:center;font-size:11px;line-height:11px;color:#1f3350;font-weight:normal;white-space:pre;">DG</div>
<div style="left:203px;top:140px;width:1px;height:13px;background:#9ba1a9"></div>
<div style="left:25px;top:140px;width:1px;height:13px;background:#9ba1a9"></div>
<svg style="left:16px;top:145px" width="6" height="6"><path d="M5.5 0.5V5.5H0.5Z" fill="#b9bec6"/></svg>
<div style="left:0px;top:154px;width:25px;height:522px;background:#dfe3e8"></div>
<div style="left:25px;top:154px;width:1px;height:522px;background:#9ba1a9"></div>
<div style="left:0px;top:189px;width:25px;height:1px;background:#c3c8cf"></div>
<div class="t" style="left:1.0px;top:177px;width:24px;text-align:center;font-size:11px;line-height:11px;color:#1f3350;font-weight:normal;white-space:pre;">1</div>
<div style="left:0px;top:214px;width:25px;height:1px;background:#c3c8cf"></div>
<div class="t" style="left:1.0px;top:202px;width:24px;text-align:center;font-size:11px;line-height:11px;color:#1f3350;font-weight:normal;white-space:pre;">2</div>
<div style="left:0px;top:270px;width:25px;height:1px;background:#c3c8cf"></div>
<div class="t" style="left:1.0px;top:258px;width:24px;text-align:center;font-size:11px;line-height:11px;color:#1f3350;font-weight:normal;white-space:pre;">3</div>
<div style="left:0px;top:299px;width:25px;height:1px;background:#c3c8cf"></div>
<div class="t" style="left:1.0px;top:287px;width:24px;text-align:center;font-size:11px;line-height:11px;color:#1f3350;font-weight:normal;white-space:pre;">62</div>
<div style="left:0px;top:328px;width:25px;height:1px;background:#c3c8cf"></div>
<div class="t" style="left:1.0px;top:316px;width:24px;text-align:center;font-size:11px;line-height:11px;color:#1f3350;font-weight:normal;white-space:pre;">63</div>
<div style="left:0px;top:357px;width:25px;height:1px;background:#c3c8cf"></div>
<div class="t" style="left:1.0px;top:345px;width:24px;text-align:center;font-size:11px;line-height:11px;color:#1f3350;font-weight:normal;white-space:pre;">64</div>
<div style="left:0px;top:386px;width:25px;height:1px;background:#c3c8cf"></div>
<div class="t" style="left:1.0px;top:374px;width:24px;text-align:center;font-size:11px;line-height:11px;color:#1f3350;font-weight:normal;white-space:pre;">65</div>
<div style="left:0px;top:415px;width:25px;height:1px;background:#c3c8cf"></div>
<div class="t" style="left:1.0px;top:403px;width:24px;text-align:center;font-size:11px;line-height:11px;color:#1f3350;font-weight:normal;white-space:pre;">66</div>
<div style="left:0px;top:416px;width:25px;height:28px;background:#fbd78f;border-right:1px solid #d9a14c;border-bottom:1px solid #d9a14c"></div>
<div style="left:0px;top:444px;width:25px;height:1px;background:#c3c8cf"></div>
<div class="t" style="left:1.0px;top:432px;width:24px;text-align:center;font-size:11px;line-height:11px;color:#1f3350;font-weight:normal;white-space:pre;">67</div>
<div style="left:0px;top:473px;width:25px;height:1px;background:#c3c8cf"></div>
<div class="t" style="left:1.0px;top:461px;width:24px;text-align:center;font-size:11px;line-height:11px;color:#1f3350;font-weight:normal;white-space:pre;">68</div>
<div style="left:0px;top:502px;width:25px;height:1px;background:#c3c8cf"></div>
<div class="t" style="left:1.0px;top:491px;width:24px;text-align:center;font-size:11px;line-height:11px;color:#1f3350;font-weight:normal;white-space:pre;">69</div>
<div style="left:0px;top:531px;width:25px;height:1px;background:#c3c8cf"></div>
<div class="t" style="left:1.0px;top:520px;width:24px;text-align:center;font-size:11px;line-height:11px;color:#1f3350;font-weight:normal;white-space:pre;">70</div>
<div style="left:0px;top:560px;width:25px;height:1px;background:#c3c8cf"></div>
<div class="t" style="left:1.0px;top:547px;width:24px;text-align:center;font-size:11px;line-height:11px;color:#1f3350;font-weight:normal;white-space:pre;">71</div>
<div style="left:0px;top:589px;width:25px;height:1px;background:#c3c8cf"></div>
<div class="t" style="left:1.0px;top:578px;width:24px;text-align:center;font-size:11px;line-height:11px;color:#1f3350;font-weight:normal;white-space:pre;">72</div>
<div style="left:0px;top:618px;width:25px;height:1px;background:#c3c8cf"></div>
<div class="t" style="left:1.0px;top:607px;width:24px;text-align:center;font-size:11px;line-height:11px;color:#1f3350;font-weight:normal;white-space:pre;">73</div>
<div style="left:0px;top:647px;width:25px;height:1px;background:#c3c8cf"></div>
<div class="t" style="left:1.0px;top:636px;width:24px;text-align:center;font-size:11px;line-height:11px;color:#1f3350;font-weight:normal;white-space:pre;">74</div>
<div style="left:0px;top:676px;width:25px;height:1px;background:#c3c8cf"></div>
<div class="t" style="left:1.0px;top:665px;width:24px;text-align:center;font-size:11px;line-height:11px;color:#1f3350;font-weight:normal;white-space:pre;">75</div>
<div style="left:77px;top:189px;width:1269px;height:1px;background:#dadcdd"></div>
<div style="left:390px;top:154px;width:1px;height:35px;background:#dadcdd"></div>
<div style="left:489px;top:154px;width:1px;height:35px;background:#dadcdd"></div>
<div style="left:567px;top:154px;width:1px;height:35px;background:#dadcdd"></div>
<div style="left:489px;top:190px;width:1px;height:24px;background:#dadcdd"></div>
<div style="left:567px;top:190px;width:1px;height:24px;background:#dadcdd"></div>
<div style="left:719px;top:154px;width:1px;height:60px;background:#dadcdd"></div>
<div style="left:820px;top:154px;width:1px;height:60px;background:#dadcdd"></div>
<div style="left:921px;top:154px;width:1px;height:60px;background:#dadcdd"></div>
<div style="left:1022px;top:154px;width:1px;height:60px;background:#dadcdd"></div>
<div style="left:1123px;top:154px;width:1px;height:60px;background:#dadcdd"></div>
<div style="left:1224px;top:154px;width:1px;height:60px;background:#dadcdd"></div>
<div style="left:1325px;top:154px;width:1px;height:60px;background:#dadcdd"></div>
<div class="t" style="left:28.4px;top:176px;font-size:12px;line-height:12px;color:#000;font-weight:bold;white-space:pre;letter-spacing:-0.356px;">CONSULTING</div>
<div class="t" style="left:108.6px;top:176px;font-size:12px;line-height:12px;color:#000;font-weight:bold;white-space:pre;letter-spacing:-0.581px;">ENGINEERS</div>
<div class="t" style="left:179.5px;top:176px;font-size:12px;line-height:12px;color:#000;font-weight:bold;white-space:pre;letter-spacing:0.000px;">&amp;</div>
<div class="t" style="left:192.4px;top:176px;font-size:12px;line-height:12px;color:#000;font-weight:bold;white-space:pre;letter-spacing:-0.295px;">CONTRACTORS</div>
<div class="t" style="left:287.5px;top:176px;font-size:12px;line-height:12px;color:#000;font-weight:bold;white-space:pre;letter-spacing:-0.062px;">(PVT)</div>
<div class="t" style="left:324.6px;top:176px;font-size:12px;line-height:12px;color:#000;font-weight:bold;white-space:pre;letter-spacing:-0.117px;">LTD.</div>
<div class="t" style="left:28.4px;top:200px;font-size:13px;line-height:13px;color:#000;font-weight:bold;white-space:pre;letter-spacing:0.060px;">Labour</div>
<div class="t" style="left:78.4px;top:200px;font-size:13px;line-height:13px;color:#000;font-weight:bold;white-space:pre;letter-spacing:0.100px;">Salaries</div>
<div class="t" style="left:133.6px;top:200px;font-size:13px;line-height:13px;color:#000;font-weight:bold;white-space:pre;letter-spacing:-0.400px;">Month</div>
<div class="t" style="left:176.2px;top:200px;font-size:13px;line-height:13px;color:#000;font-weight:bold;white-space:pre;letter-spacing:-0.600px;">of</div>
<div class="t" style="left:196.4px;top:200px;font-size:13px;line-height:13px;color:#000;font-weight:bold;white-space:pre;letter-spacing:-0.513px;">2021-</div>
<div class="t" style="left:232.4px;top:200px;font-size:13px;line-height:13px;color:#000;font-weight:bold;white-space:pre;letter-spacing:0.036px;">February</div>
<div class="t" style="left:297.6px;top:200px;font-size:13px;line-height:13px;color:#000;font-weight:bold;white-space:pre;letter-spacing:-0.110px;">Bridge</div>
<div class="t" style="left:343.9px;top:200px;font-size:13px;line-height:13px;color:#000;font-weight:bold;white-space:pre;letter-spacing:0.000px;">-</div>
<div class="t" style="left:352.3px;top:200px;font-size:13px;line-height:13px;color:#000;font-weight:bold;white-space:pre;letter-spacing:0.105px;">Nikaweratiya</div>
<div style="left:1228px;top:183px;width:2px;height:2px;background:#333"></div>
<div style="left:26px;top:215px;width:592px;height:55px;background:#9900ff"></div>
<div style="left:619px;top:215px;width:727px;height:55px;background:#ff00ff"></div>
<div style="left:26px;top:300px;width:592px;height:28px;background:#ffff00"></div>
<div style="left:619px;top:300px;width:727px;height:28px;background:#ffff00"></div>
<div style="left:26px;top:329px;width:592px;height:28px;background:#ffff00"></div>
<div style="left:619px;top:329px;width:727px;height:28px;background:#ffff00"></div>
<div style="left:26px;top:358px;width:592px;height:28px;background:#ffff00"></div>
<div style="left:619px;top:358px;width:727px;height:28px;background:#ffff00"></div>
<div style="left:26px;top:387px;width:592px;height:28px;background:#ffff00"></div>
<div style="left:619px;top:387px;width:727px;height:28px;background:#ffff00"></div>
<div style="left:26px;top:416px;width:592px;height:28px;background:#ffff00"></div>
<div style="left:619px;top:416px;width:727px;height:28px;background:#ffff00"></div>
<div style="left:26px;top:445px;width:592px;height:28px;background:#ffff00"></div>
<div style="left:619px;top:445px;width:727px;height:28px;background:#ffff00"></div>
<div style="left:26px;top:503px;width:592px;height:28px;background:#ffff00"></div>
<div style="left:619px;top:503px;width:727px;height:28px;background:#ffff00"></div>
<div style="left:1326px;top:532px;width:20px;height:28px;background:#fde49e"></div>
<div style="left:26px;top:561px;width:592px;height:28px;background:#ffff00"></div>
<div style="left:619px;top:561px;width:727px;height:28px;background:#ffff00"></div>
<div style="left:26px;top:590px;width:592px;height:28px;background:#ffff00"></div>
<div style="left:619px;top:590px;width:727px;height:28px;background:#ffff00"></div>
<div style="left:26px;top:214px;width:1320px;height:1px;background:#000"></div>
<div style="left:76px;top:215px;width:1px;height:345px;background:#000"></div>
<div style="left:127px;top:215px;width:1px;height:461px;background:#000"></div>
<div style="left:202px;top:215px;width:1px;height:461px;background:#000"></div>
<div style="left:260px;top:215px;width:1px;height:461px;background:#000"></div>
<div style="left:390px;top:215px;width:1px;height:461px;background:#000"></div>
<div style="left:489px;top:215px;width:1px;height:461px;background:#000"></div>
<div style="left:567px;top:215px;width:1px;height:461px;background:#000"></div>
<div style="left:719px;top:215px;width:1px;height:461px;background:#000"></div>
<div style="left:820px;top:215px;width:1px;height:461px;background:#000"></div>
<div style="left:921px;top:215px;width:1px;height:461px;background:#000"></div>
<div style="left:1022px;top:215px;width:1px;height:461px;background:#000"></div>
<div style="left:1123px;top:215px;width:1px;height:461px;background:#000"></div>
<div style="left:1224px;top:215px;width:1px;height:461px;background:#000"></div>
<div style="left:1325px;top:215px;width:1px;height:461px;background:#000"></div>
<div style="left:26px;top:299px;width:1320px;height:1px;background:#000"></div>
<div style="left:26px;top:328px;width:1320px;height:1px;background:#000"></div>
<div style="left:26px;top:357px;width:1320px;height:1px;background:#000"></div>
<div style="left:26px;top:386px;width:1320px;height:1px;background:#000"></div>
<div style="left:26px;top:415px;width:1320px;height:1px;background:#000"></div>
<div style="left:26px;top:444px;width:1320px;height:1px;background:#000"></div>
<div style="left:26px;top:473px;width:1320px;height:1px;background:#000"></div>
<div style="left:26px;top:502px;width:1320px;height:1px;background:#000"></div>
<div style="left:26px;top:531px;width:1320px;height:1px;background:#000"></div>
<div style="left:26px;top:560px;width:1320px;height:1px;background:#000"></div>
<div style="left:26px;top:589px;width:1320px;height:1px;background:#000"></div>
<div style="left:26px;top:618px;width:1320px;height:1px;background:#000"></div>
<div style="left:26px;top:647px;width:1320px;height:1px;background:#000"></div>
<div style="left:26px;top:676px;width:1320px;height:1px;background:#000"></div>
<div style="left:26px;top:270px;width:1320px;height:1px;background:#000"></div>
<div style="left:618px;top:140px;width:1px;height:536px;background:#6f6f6f"></div>
<div class="t" style="left:28.6px;top:237px;font-size:12.3px;line-height:12.3px;color:#fff;font-weight:bold;white-space:pre;letter-spacing:-0.290px;">EMP No</div>
<div class="t" style="left:81.3px;top:237px;font-size:12.3px;line-height:12.3px;color:#fff;font-weight:bold;white-space:pre;letter-spacing:-0.710px;">EPF No</div>
<div class="t" style="left:132.1px;top:237px;font-size:12.3px;line-height:12.3px;color:#fff;font-weight:bold;white-space:pre;letter-spacing:0.519px;">ID number</div>
<div class="t" style="left:216.4px;top:230px;font-size:12.3px;line-height:12.3px;color:#fff;font-weight:bold;white-space:pre;letter-spacing:-0.500px;">Fixed</div>
<div class="t" style="left:206.1px;top:245px;font-size:12.3px;line-height:12.3px;color:#fff;font-weight:bold;white-space:pre;letter-spacing:0.660px;">Amount</div>
<div class="t" style="left:278.6px;top:237px;font-size:12.3px;line-height:12.3px;color:#fff;font-weight:bold;white-space:pre;letter-spacing:-0.050px;">Employee Name</div>
<div class="t" style="left:403.9px;top:237px;font-size:12.3px;line-height:12.3px;color:#fff;font-weight:bold;white-space:pre;letter-spacing:0.110px;">Designation</div>
<div class="t" style="left:513.4px;top:237px;font-size:12.3px;line-height:12.3px;color:#fff;font-weight:bold;white-space:pre;letter-spacing:-0.812px;">Class</div>
<div class="t" style="left:574.6px;top:230px;font-size:12.3px;line-height:12.3px;color:#fff;font-weight:bold;white-space:pre;letter-spacing:0.000px;">Day</div>
<div class="t" style="left:570.6px;top:245px;font-size:12.3px;line-height:12.3px;color:#fff;font-weight:bold;white-space:pre;letter-spacing:0.450px;">Rate</div>
<div class="t" style="left:645.2px;top:258px;font-size:12.3px;line-height:12.3px;color:#fff;font-weight:bold;white-space:pre;letter-spacing:0.058px;">Advance</div>
<div class="t" style="left:761.2px;top:258px;font-size:12.3px;line-height:12.3px;color:#fff;font-weight:bold;white-space:pre;letter-spacing:0.375px;">Net</div>
<div class="t" style="left:840.2px;top:258px;font-size:12.3px;line-height:12.3px;color:#fff;font-weight:bold;white-space:pre;letter-spacing:0.281px;">ID Number</div>
<div class="t" style="left:931.6px;top:258px;font-size:12.3px;line-height:12.3px;color:#fff;font-weight:bold;white-space:pre;letter-spacing:0.455px;">Round up Net</div>
<div class="t" style="left:1044.9px;top:258px;font-size:12.3px;line-height:12.3px;color:#fff;font-weight:bold;white-space:pre;letter-spacing:0.431px;">Signature</div>
<div class="t" style="left:1148.0px;top:258px;font-size:12.3px;line-height:12.3px;color:#fff;font-weight:bold;white-space:pre;letter-spacing:0.433px;">EPF 12%</div>
<div class="t" style="left:1249.4px;top:258px;font-size:12.3px;line-height:12.3px;color:#fff;font-weight:bold;white-space:pre;letter-spacing:0.317px;">EPF 03%</div>
<div style="left:1326px;top:215px;width:20px;height:55px;overflow:hidden"><div class="t" style="left:12px;top:43px;font-size:12.3px;line-height:12px;color:#fff;font-weight:bold">Deductions</div></div>
<div style="left:26px;top:271px;width:50px;height:28px;overflow:hidden"><div class="t" style="left:2px;top:16px;font-size:11px;line-height:11px;color:#000;white-space:pre;letter-spacing:-0.07px;">Oct20-021</div></div>
<div style="left:77px;top:271px;width:50px;height:28px;overflow:hidden"><div class="t" style="right:13px;top:16px;font-size:11px;line-height:11px;color:#000;white-space:pre;letter-spacing:-0.06px;">7501</div></div>
<div style="left:128px;top:271px;width:74px;height:28px;overflow:hidden"><div class="t" style="right:3px;top:16px;font-size:11px;line-height:11px;color:#000;white-space:pre;letter-spacing:0.04px;">2.00123E+11</div></div>
<div style="left:261px;top:271px;width:129px;height:28px;overflow:hidden"><div class="t" style="left:2px;top:16px;font-size:11px;line-height:11px;color:#000;white-space:pre;letter-spacing:-0.38px;">DMHD Senavirathna</div></div>
<div style="left:391px;top:271px;width:98px;height:28px;overflow:hidden"><div class="t" style="left:2px;top:16px;font-size:11px;line-height:11px;color:#000;white-space:pre;letter-spacing:-0.26px;">Labour</div></div>
<div style="left:490px;top:271px;width:77px;height:28px;overflow:hidden"><div class="t" style="left:2px;top:16px;font-size:11px;line-height:11px;color:#000;white-space:pre;letter-spacing:0.02px;">Bridge - Nikaweratiya</div></div>
<div style="left:568px;top:271px;width:50px;height:28px;overflow:hidden"><div class="t" style="right:7px;top:16px;font-size:11px;line-height:11px;color:#000;white-space:pre;letter-spacing:-0.06px;">900</div></div>
<div style="left:619px;top:271px;width:100px;height:28px;overflow:hidden"><div class="t" style="right:2px;top:16px;font-size:11px;line-height:11px;color:#000;white-space:pre;letter-spacing:0.25px;">0.00</div></div>
<div style="left:720px;top:271px;width:100px;height:28px;overflow:hidden"><div class="t" style="right:2px;top:16px;font-size:11px;line-height:11px;color:#000;white-space:pre;letter-spacing:0.30px;">-300.00</div></div>
<div style="left:821px;top:271px;width:100px;height:28px;overflow:hidden"><div class="t" style="left:1px;top:16px;font-size:11px;line-height:11px;color:#000;white-space:pre;letter-spacing:0.04px;">2.00123E+11</div></div>
<div style="left:922px;top:271px;width:100px;height:28px;overflow:hidden"><div class="t" style="right:2px;top:16px;font-size:11px;line-height:11px;color:#000;white-space:pre;letter-spacing:0.41px;">(300.00)</div></div>
<div style="left:1124px;top:271px;width:100px;height:28px;overflow:hidden"><div class="t" style="right:17px;top:16px;font-size:11px;line-height:11px;color:#000;white-space:pre;letter-spacing:1.19px;">-</div></div>
<div style="left:1225px;top:271px;width:100px;height:28px;overflow:hidden"><div class="t" style="right:17px;top:16px;font-size:11px;line-height:11px;color:#000;white-space:pre;letter-spacing:1.19px;">-</div></div>
<div style="left:26px;top:300px;width:50px;height:28px;overflow:hidden"><div class="t" style="left:2px;top:16px;font-size:11px;line-height:11px;color:#000;white-space:pre;letter-spacing:-0.07px;">Oct20-022</div></div>
<div style="left:77px;top:300px;width:50px;height:28px;overflow:hidden"><div class="t" style="right:13px;top:16px;font-size:11px;line-height:11px;color:#000;white-space:pre;letter-spacing:-0.06px;">7502</div></div>
<div style="left:128px;top:300px;width:74px;height:28px;overflow:hidden"><div class="t" style="left:2px;top:16px;font-size:11px;line-height:11px;color:#000;white-space:pre;letter-spacing:-0.20px;">903471581V</div></div>
<div style="left:261px;top:300px;width:129px;height:28px;overflow:hidden"><div class="t" style="left:2px;top:16px;font-size:11px;line-height:11px;color:#000;white-space:pre;letter-spacing:-0.58px;">RMSA Kumara</div></div>
<div style="left:391px;top:300px;width:98px;height:28px;overflow:hidden"><div class="t" style="left:2px;top:16px;font-size:11px;line-height:11px;color:#000;white-space:pre;letter-spacing:-0.26px;">Labour</div></div>
<div style="left:490px;top:300px;width:77px;height:28px;overflow:hidden"><div class="t" style="left:2px;top:16px;font-size:11px;line-height:11px;color:#000;white-space:pre;letter-spacing:0.02px;">Bridge - Nikaweratiya</div></div>
<div style="left:568px;top:300px;width:50px;height:28px;overflow:hidden"><div class="t" style="right:7px;top:16px;font-size:11px;line-height:11px;color:#000;white-space:pre;letter-spacing:-0.06px;">900</div></div>
<div style="left:619px;top:300px;width:100px;height:28px;overflow:hidden"><div class="t" style="right:2px;top:16px;font-size:11px;line-height:11px;color:#000;white-space:pre;letter-spacing:0.25px;">0.00</div></div>
<div style="left:720px;top:300px;width:100px;height:28px;overflow:hidden"><div class="t" style="right:2px;top:16px;font-size:11px;line-height:11px;color:#000;white-space:pre;letter-spacing:0.22px;">29,111.25</div></div>
<div style="left:821px;top:300px;width:100px;height:28px;overflow:hidden"><div class="t" style="left:1px;top:16px;font-size:11px;line-height:11px;color:#000;white-space:pre;letter-spacing:-0.20px;">903471581V</div></div>
<div style="left:922px;top:300px;width:100px;height:28px;overflow:hidden"><div class="t" style="right:6px;top:16px;font-size:11px;line-height:11px;color:#000;white-space:pre;letter-spacing:0.22px;">29,115.00</div></div>
<div style="left:1124px;top:300px;width:100px;height:28px;overflow:hidden"><div class="t" style="right:6px;top:16px;font-size:11px;line-height:11px;color:#000;white-space:pre;letter-spacing:0.25px;">1,980.00</div></div>
<div style="left:1225px;top:300px;width:100px;height:28px;overflow:hidden"><div class="t" style="right:6px;top:16px;font-size:11px;line-height:11px;color:#000;white-space:pre;letter-spacing:0.15px;">495.00</div></div>
<div style="left:26px;top:329px;width:50px;height:28px;overflow:hidden"><div class="t" style="left:2px;top:16px;font-size:11px;line-height:11px;color:#000;white-space:pre;letter-spacing:-0.07px;">Oct20-023</div></div>
<div style="left:77px;top:329px;width:50px;height:28px;overflow:hidden"><div class="t" style="right:13px;top:16px;font-size:11px;line-height:11px;color:#000;white-space:pre;letter-spacing:-0.06px;">7503</div></div>
<div style="left:128px;top:329px;width:74px;height:28px;overflow:hidden"><div class="t" style="left:2px;top:16px;font-size:11px;line-height:11px;color:#000;white-space:pre;letter-spacing:-0.20px;">871072094V</div></div>
<div style="left:261px;top:329px;width:129px;height:28px;overflow:hidden"><div class="t" style="left:2px;top:16px;font-size:11px;line-height:11px;color:#000;white-space:pre;letter-spacing:-0.38px;">HDMD Thilakawansa</div></div>
<div style="left:391px;top:329px;width:98px;height:28px;overflow:hidden"><div class="t" style="left:2px;top:16px;font-size:11px;line-height:11px;color:#000;white-space:pre;letter-spacing:-0.26px;">Labour</div></div>
<div style="left:490px;top:329px;width:77px;height:28px;overflow:hidden"><div class="t" style="left:2px;top:16px;font-size:11px;line-height:11px;color:#000;white-space:pre;letter-spacing:0.02px;">Bridge - Nikaweratiya</div></div>
<div style="left:568px;top:329px;width:50px;height:28px;overflow:hidden"><div class="t" style="right:7px;top:16px;font-size:11px;line-height:11px;color:#000;white-space:pre;letter-spacing:-0.06px;">900</div></div>
<div style="left:619px;top:329px;width:100px;height:28px;overflow:hidden"><div class="t" style="right:2px;top:16px;font-size:11px;line-height:11px;color:#000;white-space:pre;letter-spacing:0.25px;">0.00</div></div>
<div style="left:720px;top:329px;width:100px;height:28px;overflow:hidden"><div class="t" style="right:2px;top:16px;font-size:11px;line-height:11px;color:#000;white-space:pre;letter-spacing:0.22px;">14,519.89</div></div>
<div style="left:821px;top:329px;width:100px;height:28px;overflow:hidden"><div class="t" style="left:1px;top:16px;font-size:11px;line-height:11px;color:#000;white-space:pre;letter-spacing:-0.20px;">871072094V</div></div>
<div style="left:922px;top:329px;width:100px;height:28px;overflow:hidden"><div class="t" style="right:6px;top:16px;font-size:11px;line-height:11px;color:#000;white-space:pre;letter-spacing:0.22px;">14,520.00</div></div>
<div style="left:1124px;top:329px;width:100px;height:28px;overflow:hidden"><div class="t" style="right:6px;top:16px;font-size:11px;line-height:11px;color:#000;white-space:pre;letter-spacing:0.25px;">1,267.20</div></div>
<div style="left:1225px;top:329px;width:100px;height:28px;overflow:hidden"><div class="t" style="right:6px;top:16px;font-size:11px;line-height:11px;color:#000;white-space:pre;letter-spacing:0.15px;">316.80</div></div>
<div style="left:26px;top:358px;width:50px;height:28px;overflow:hidden"><div class="t" style="left:2px;top:16px;font-size:11px;line-height:11px;color:#000;white-space:pre;letter-spacing:-0.07px;">Oct20-025</div></div>
<div style="left:77px;top:358px;width:50px;height:28px;overflow:hidden"><div class="t" style="right:13px;top:16px;font-size:11px;line-height:11px;color:#000;white-space:pre;letter-spacing:-0.06px;">7504</div></div>
<div style="left:128px;top:358px;width:74px;height:28px;overflow:hidden"><div class="t" style="left:2px;top:16px;font-size:11px;line-height:11px;color:#000;white-space:pre;letter-spacing:-0.20px;">721012298V</div></div>
<div style="left:261px;top:358px;width:129px;height:28px;overflow:hidden"><div class="t" style="left:2px;top:16px;font-size:11px;line-height:11px;color:#000;white-space:pre;letter-spacing:-0.48px;">HMD Herath</div></div>
<div style="left:391px;top:358px;width:98px;height:28px;overflow:hidden"><div class="t" style="left:2px;top:16px;font-size:11px;line-height:11px;color:#000;white-space:pre;letter-spacing:-0.26px;">Labour</div></div>
<div style="left:490px;top:358px;width:77px;height:28px;overflow:hidden"><div class="t" style="left:2px;top:16px;font-size:11px;line-height:11px;color:#000;white-space:pre;letter-spacing:0.02px;">Bridge - Nikaweratiya</div></div>
<div style="left:568px;top:358px;width:50px;height:28px;overflow:hidden"><div class="t" style="right:7px;top:16px;font-size:11px;line-height:11px;color:#000;white-space:pre;letter-spacing:-0.06px;">900</div></div>
<div style="left:619px;top:358px;width:100px;height:28px;overflow:hidden"><div class="t" style="right:2px;top:16px;font-size:11px;line-height:11px;color:#000;white-space:pre;letter-spacing:0.25px;">0.00</div></div>
<div style="left:720px;top:358px;width:100px;height:28px;overflow:hidden"><div class="t" style="right:2px;top:16px;font-size:11px;line-height:11px;color:#000;white-space:pre;letter-spacing:0.22px;">28,492.50</div></div>
<div style="left:821px;top:358px;width:100px;height:28px;overflow:hidden"><div class="t" style="left:1px;top:16px;font-size:11px;line-height:11px;color:#000;white-space:pre;letter-spacing:-0.20px;">721012298V</div></div>
<div style="left:922px;top:358px;width:100px;height:28px;overflow:hidden"><div class="t" style="right:6px;top:16px;font-size:11px;line-height:11px;color:#000;white-space:pre;letter-spacing:0.22px;">28,495.00</div></div>
<div style="left:1124px;top:358px;width:100px;height:28px;overflow:hidden"><div class="t" style="right:6px;top:16px;font-size:11px;line-height:11px;color:#000;white-space:pre;letter-spacing:0.25px;">1,980.00</div></div>
<div style="left:1225px;top:358px;width:100px;height:28px;overflow:hidden"><div class="t" style="right:6px;top:16px;font-size:11px;line-height:11px;color:#000;white-space:pre;letter-spacing:0.15px;">495.00</div></div>
<div style="left:26px;top:387px;width:50px;height:28px;overflow:hidden"><div class="t" style="left:2px;top:16px;font-size:11px;line-height:11px;color:#000;white-space:pre;letter-spacing:-0.07px;">Oct20-026</div></div>
<div style="left:77px;top:387px;width:50px;height:28px;overflow:hidden"><div class="t" style="right:13px;top:16px;font-size:11px;line-height:11px;color:#000;white-space:pre;letter-spacing:-0.06px;">7505</div></div>
<div style="left:128px;top:387px;width:74px;height:28px;overflow:hidden"><div class="t" style="right:3px;top:16px;font-size:11px;line-height:11px;color:#000;white-space:pre;letter-spacing:0.04px;">1.99216E+11</div></div>
<div style="left:261px;top:387px;width:129px;height:28px;overflow:hidden"><div class="t" style="left:2px;top:16px;font-size:11px;line-height:11px;color:#000;white-space:pre;letter-spacing:-0.43px;">RMDP Rathnayaka</div></div>
<div style="left:391px;top:387px;width:98px;height:28px;overflow:hidden"><div class="t" style="left:2px;top:16px;font-size:11px;line-height:11px;color:#000;white-space:pre;letter-spacing:-0.26px;">Labour</div></div>
<div style="left:490px;top:387px;width:77px;height:28px;overflow:hidden"><div class="t" style="left:2px;top:16px;font-size:11px;line-height:11px;color:#000;white-space:pre;letter-spacing:0.02px;">Bridge - Nikaweratiya</div></div>
<div style="left:568px;top:387px;width:50px;height:28px;overflow:hidden"><div class="t" style="right:7px;top:16px;font-size:11px;line-height:11px;color:#000;white-space:pre;letter-spacing:-0.06px;">900</div></div>
<div style="left:619px;top:387px;width:100px;height:28px;overflow:hidden"><div class="t" style="right:2px;top:16px;font-size:11px;line-height:11px;color:#000;white-space:pre;letter-spacing:0.25px;">0.00</div></div>
<div style="left:720px;top:387px;width:100px;height:28px;overflow:hidden"><div class="t" style="right:2px;top:16px;font-size:11px;line-height:11px;color:#000;white-space:pre;letter-spacing:0.22px;">17,768.33</div></div>
<div style="left:821px;top:387px;width:100px;height:28px;overflow:hidden"><div class="t" style="left:1px;top:16px;font-size:11px;line-height:11px;color:#000;white-space:pre;letter-spacing:0.04px;">1.99216E+11</div></div>
<div style="left:922px;top:387px;width:100px;height:28px;overflow:hidden"><div class="t" style="right:6px;top:16px;font-size:11px;line-height:11px;color:#000;white-space:pre;letter-spacing:0.22px;">17,770.00</div></div>
<div style="left:1124px;top:387px;width:100px;height:28px;overflow:hidden"><div class="t" style="right:6px;top:16px;font-size:11px;line-height:11px;color:#000;white-space:pre;letter-spacing:0.25px;">1,267.20</div></div>
<div style="left:1225px;top:387px;width:100px;height:28px;overflow:hidden"><div class="t" style="right:6px;top:16px;font-size:11px;line-height:11px;color:#000;white-space:pre;letter-spacing:0.15px;">316.80</div></div>
<div style="left:26px;top:416px;width:50px;height:28px;overflow:hidden"><div class="t" style="left:2px;top:16px;font-size:11px;line-height:11px;color:#000;white-space:pre;letter-spacing:-0.07px;">Oct20-028</div></div>
<div style="left:77px;top:416px;width:50px;height:28px;overflow:hidden"><div class="t" style="right:13px;top:16px;font-size:11px;line-height:11px;color:#000;white-space:pre;letter-spacing:-0.06px;">7507</div></div>
<div style="left:128px;top:416px;width:74px;height:28px;overflow:hidden"><div class="t" style="left:2px;top:16px;font-size:11px;line-height:11px;color:#000;white-space:pre;letter-spacing:-0.20px;">661642181V</div></div>
<div style="left:261px;top:416px;width:129px;height:28px;overflow:hidden"><div class="t" style="left:2px;top:16px;font-size:11px;line-height:11px;color:#000;white-space:pre;letter-spacing:-0.23px;">UG Wickramapala</div></div>
<div style="left:391px;top:416px;width:98px;height:28px;overflow:hidden"><div class="t" style="left:2px;top:16px;font-size:11px;line-height:11px;color:#000;white-space:pre;letter-spacing:-0.26px;">Labour</div></div>
<div style="left:490px;top:416px;width:77px;height:28px;overflow:hidden"><div class="t" style="left:2px;top:16px;font-size:11px;line-height:11px;color:#000;white-space:pre;letter-spacing:0.02px;">Bridge - Nikaweratiya</div></div>
<div style="left:568px;top:416px;width:50px;height:28px;overflow:hidden"><div class="t" style="right:7px;top:16px;font-size:11px;line-height:11px;color:#000;white-space:pre;letter-spacing:-0.06px;">900</div></div>
<div style="left:619px;top:416px;width:100px;height:28px;overflow:hidden"><div class="t" style="right:2px;top:16px;font-size:11px;line-height:11px;color:#000;white-space:pre;letter-spacing:0.25px;">0.00</div></div>
<div style="left:720px;top:416px;width:100px;height:28px;overflow:hidden"><div class="t" style="right:2px;top:16px;font-size:11px;line-height:11px;color:#000;white-space:pre;letter-spacing:0.22px;">23,886.53</div></div>
<div style="left:821px;top:416px;width:100px;height:28px;overflow:hidden"><div class="t" style="left:1px;top:16px;font-size:11px;line-height:11px;color:#000;white-space:pre;letter-spacing:-0.20px;">661642181V</div></div>
<div style="left:922px;top:416px;width:100px;height:28px;overflow:hidden"><div class="t" style="right:6px;top:16px;font-size:11px;line-height:11px;color:#000;white-space:pre;letter-spacing:0.22px;">23,890.00</div></div>
<div style="left:1124px;top:416px;width:100px;height:28px;overflow:hidden"><div class="t" style="right:6px;top:16px;font-size:11px;line-height:11px;color:#000;white-space:pre;letter-spacing:0.25px;">1,742.40</div></div>
<div style="left:1225px;top:416px;width:100px;height:28px;overflow:hidden"><div class="t" style="right:6px;top:16px;font-size:11px;line-height:11px;color:#000;white-space:pre;letter-spacing:0.15px;">435.60</div></div>
<div style="left:26px;top:445px;width:50px;height:28px;overflow:hidden"><div class="t" style="left:2px;top:16px;font-size:11px;line-height:11px;color:#000;white-space:pre;letter-spacing:-0.07px;">Oct20-085</div></div>
<div style="left:77px;top:445px;width:50px;height:28px;overflow:hidden"><div class="t" style="right:13px;top:16px;font-size:11px;line-height:11px;color:#000;white-space:pre;letter-spacing:-0.06px;">7536</div></div>
<div style="left:128px;top:445px;width:74px;height:28px;overflow:hidden"><div class="t" style="left:2px;top:16px;font-size:11px;line-height:11px;color:#000;white-space:pre;letter-spacing:-0.20px;">891973080V</div></div>
<div style="left:261px;top:445px;width:129px;height:28px;overflow:hidden"><div class="t" style="left:2px;top:16px;font-size:11px;line-height:11px;color:#000;white-space:pre;letter-spacing:-0.31px;">IM Udayanga</div></div>
<div style="left:391px;top:445px;width:98px;height:28px;overflow:hidden"><div class="t" style="left:2px;top:16px;font-size:11px;line-height:11px;color:#000;white-space:pre;letter-spacing:-0.18px;">Carpenter</div></div>
<div style="left:490px;top:445px;width:77px;height:28px;overflow:hidden"><div class="t" style="left:2px;top:16px;font-size:11px;line-height:11px;color:#000;white-space:pre;letter-spacing:0.02px;">Bridge - Nikaweratiya</div></div>
<div style="left:568px;top:445px;width:50px;height:28px;overflow:hidden"><div class="t" style="right:7px;top:16px;font-size:11px;line-height:11px;color:#000;white-space:pre;letter-spacing:0.19px;">1,300</div></div>
<div style="left:619px;top:445px;width:100px;height:28px;overflow:hidden"><div class="t" style="right:2px;top:16px;font-size:11px;line-height:11px;color:#000;white-space:pre;letter-spacing:0.25px;">0.00</div></div>
<div style="left:720px;top:445px;width:100px;height:28px;overflow:hidden"><div class="t" style="right:2px;top:16px;font-size:11px;line-height:11px;color:#000;white-space:pre;letter-spacing:0.22px;">23,229.15</div></div>
<div style="left:821px;top:445px;width:100px;height:28px;overflow:hidden"><div class="t" style="left:1px;top:16px;font-size:11px;line-height:11px;color:#000;white-space:pre;letter-spacing:-0.20px;">891973080V</div></div>
<div style="left:922px;top:445px;width:100px;height:28px;overflow:hidden"><div class="t" style="right:6px;top:16px;font-size:11px;line-height:11px;color:#000;white-space:pre;letter-spacing:0.22px;">23,230.00</div></div>
<div style="left:1124px;top:445px;width:100px;height:28px;overflow:hidden"><div class="t" style="right:6px;top:16px;font-size:11px;line-height:11px;color:#000;white-space:pre;letter-spacing:0.25px;">1,814.40</div></div>
<div style="left:1225px;top:445px;width:100px;height:28px;overflow:hidden"><div class="t" style="right:6px;top:16px;font-size:11px;line-height:11px;color:#000;white-space:pre;letter-spacing:0.15px;">453.60</div></div>
<div style="left:26px;top:474px;width:50px;height:28px;overflow:hidden"><div class="t" style="left:2px;top:17px;font-size:11px;line-height:11px;color:#000;white-space:pre;letter-spacing:-0.07px;">Nov20-003</div></div>
<div style="left:77px;top:474px;width:50px;height:28px;overflow:hidden"><div class="t" style="right:13px;top:17px;font-size:11px;line-height:11px;color:#000;white-space:pre;letter-spacing:-0.06px;">7550</div></div>
<div style="left:128px;top:474px;width:74px;height:28px;overflow:hidden"><div class="t" style="left:2px;top:17px;font-size:11px;line-height:11px;color:#000;white-space:pre;letter-spacing:-0.20px;">851634304V</div></div>
<div style="left:261px;top:474px;width:129px;height:28px;overflow:hidden"><div class="t" style="left:2px;top:17px;font-size:11px;line-height:11px;color:#000;white-space:pre;letter-spacing:-0.49px;">RHMAP Rajakaruna</div></div>
<div style="left:391px;top:474px;width:98px;height:28px;overflow:hidden"><div class="t" style="left:2px;top:17px;font-size:11px;line-height:11px;color:#000;white-space:pre;letter-spacing:-0.26px;">Labour</div></div>
<div style="left:490px;top:474px;width:77px;height:28px;overflow:hidden"><div class="t" style="left:2px;top:17px;font-size:11px;line-height:11px;color:#000;white-space:pre;letter-spacing:0.02px;">Bridge - Nikaweratiya</div></div>
<div style="left:568px;top:474px;width:50px;height:28px;overflow:hidden"><div class="t" style="right:7px;top:17px;font-size:11px;line-height:11px;color:#000;white-space:pre;letter-spacing:-0.06px;">900</div></div>
<div style="left:619px;top:474px;width:100px;height:28px;overflow:hidden"><div class="t" style="right:2px;top:17px;font-size:11px;line-height:11px;color:#000;white-space:pre;letter-spacing:0.25px;">0.00</div></div>
<div style="left:720px;top:474px;width:100px;height:28px;overflow:hidden"><div class="t" style="right:2px;top:17px;font-size:11px;line-height:11px;color:#000;white-space:pre;letter-spacing:0.30px;">-300.00</div></div>
<div style="left:821px;top:474px;width:100px;height:28px;overflow:hidden"><div class="t" style="left:1px;top:17px;font-size:11px;line-height:11px;color:#000;white-space:pre;letter-spacing:-0.20px;">851634304V</div></div>
<div style="left:922px;top:474px;width:100px;height:28px;overflow:hidden"><div class="t" style="right:2px;top:17px;font-size:11px;line-height:11px;color:#000;white-space:pre;letter-spacing:0.41px;">(300.00)</div></div>
<div style="left:1124px;top:474px;width:100px;height:28px;overflow:hidden"><div class="t" style="right:17px;top:17px;font-size:11px;line-height:11px;color:#000;white-space:pre;letter-spacing:1.19px;">-</div></div>
<div style="left:1225px;top:474px;width:100px;height:28px;overflow:hidden"><div class="t" style="right:17px;top:17px;font-size:11px;line-height:11px;color:#000;white-space:pre;letter-spacing:1.19px;">-</div></div>
<div style="left:26px;top:503px;width:50px;height:28px;overflow:hidden"><div class="t" style="left:2px;top:17px;font-size:11px;line-height:11px;color:#000;white-space:pre;letter-spacing:-0.07px;">Nov20-004</div></div>
<div style="left:77px;top:503px;width:50px;height:28px;overflow:hidden"><div class="t" style="right:13px;top:17px;font-size:11px;line-height:11px;color:#000;white-space:pre;letter-spacing:-0.06px;">7551</div></div>
<div style="left:128px;top:503px;width:74px;height:28px;overflow:hidden"><div class="t" style="left:2px;top:17px;font-size:11px;line-height:11px;color:#000;white-space:pre;letter-spacing:-0.20px;">852655097V</div></div>
<div style="left:261px;top:503px;width:129px;height:28px;overflow:hidden"><div class="t" style="left:2px;top:17px;font-size:11px;line-height:11px;color:#000;white-space:pre;letter-spacing:-0.35px;">GCL Jayarathna</div></div>
<div style="left:391px;top:503px;width:98px;height:28px;overflow:hidden"><div class="t" style="left:2px;top:17px;font-size:11px;line-height:11px;color:#000;white-space:pre;letter-spacing:-0.26px;">Labour</div></div>
<div style="left:490px;top:503px;width:77px;height:28px;overflow:hidden"><div class="t" style="left:2px;top:17px;font-size:11px;line-height:11px;color:#000;white-space:pre;letter-spacing:0.02px;">Bridge - Nikaweratiya</div></div>
<div style="left:568px;top:503px;width:50px;height:28px;overflow:hidden"><div class="t" style="right:7px;top:17px;font-size:11px;line-height:11px;color:#000;white-space:pre;letter-spacing:-0.06px;">900</div></div>
<div style="left:619px;top:503px;width:100px;height:28px;overflow:hidden"><div class="t" style="right:2px;top:17px;font-size:11px;line-height:11px;color:#000;white-space:pre;letter-spacing:0.25px;">0.00</div></div>
<div style="left:720px;top:503px;width:100px;height:28px;overflow:hidden"><div class="t" style="right:2px;top:17px;font-size:11px;line-height:11px;color:#000;white-space:pre;letter-spacing:0.22px;">22,494.34</div></div>
<div style="left:821px;top:503px;width:100px;height:28px;overflow:hidden"><div class="t" style="left:1px;top:17px;font-size:11px;line-height:11px;color:#000;white-space:pre;letter-spacing:-0.20px;">852655097V</div></div>
<div style="left:922px;top:503px;width:100px;height:28px;overflow:hidden"><div class="t" style="right:6px;top:17px;font-size:11px;line-height:11px;color:#000;white-space:pre;letter-spacing:0.22px;">22,495.00</div></div>
<div style="left:1124px;top:503px;width:100px;height:28px;overflow:hidden"><div class="t" style="right:6px;top:17px;font-size:11px;line-height:11px;color:#000;white-space:pre;letter-spacing:0.25px;">1,742.40</div></div>
<div style="left:1225px;top:503px;width:100px;height:28px;overflow:hidden"><div class="t" style="right:6px;top:17px;font-size:11px;line-height:11px;color:#000;white-space:pre;letter-spacing:0.15px;">435.60</div></div>
<div style="left:26px;top:532px;width:50px;height:28px;overflow:hidden"><div class="t" style="left:2px;top:15px;font-size:11px;line-height:11px;color:#000;white-space:pre;letter-spacing:-0.07px;">Nov20-017</div></div>
<div style="left:77px;top:532px;width:50px;height:28px;overflow:hidden"><div class="t" style="right:13px;top:15px;font-size:11px;line-height:11px;color:#000;white-space:pre;letter-spacing:-0.06px;">7559</div></div>
<div style="left:128px;top:532px;width:74px;height:28px;overflow:hidden"><div class="t" style="left:2px;top:15px;font-size:11px;line-height:11px;color:#000;white-space:pre;letter-spacing:-0.20px;">793372787V</div></div>
<div style="left:261px;top:532px;width:129px;height:28px;overflow:hidden"><div class="t" style="left:2px;top:15px;font-size:11px;line-height:11px;color:#000;white-space:pre;letter-spacing:-0.35px;">NGP Jayathissa</div></div>
<div style="left:391px;top:532px;width:98px;height:28px;overflow:hidden"><div class="t" style="left:2px;top:15px;font-size:11px;line-height:11px;color:#000;white-space:pre;letter-spacing:-0.15px;">Safety Helper</div></div>
<div style="left:490px;top:532px;width:77px;height:28px;overflow:hidden"><div class="t" style="left:2px;top:15px;font-size:11px;line-height:11px;color:#000;white-space:pre;letter-spacing:0.02px;">Bridge - Nikaweratiya</div></div>
<div style="left:568px;top:532px;width:50px;height:28px;overflow:hidden"><div class="t" style="right:7px;top:15px;font-size:11px;line-height:11px;color:#000;white-space:pre;letter-spacing:-0.06px;">850</div></div>
<div style="left:619px;top:532px;width:100px;height:28px;overflow:hidden"><div class="t" style="right:2px;top:15px;font-size:11px;line-height:11px;color:#000;white-space:pre;letter-spacing:0.25px;">0.00</div></div>
<div style="left:720px;top:532px;width:100px;height:28px;overflow:hidden"><div class="t" style="right:2px;top:15px;font-size:11px;line-height:11px;color:#000;white-space:pre;letter-spacing:0.25px;">0.00</div></div>
<div style="left:821px;top:532px;width:100px;height:28px;overflow:hidden"><div class="t" style="left:1px;top:15px;font-size:11px;line-height:11px;color:#000;white-space:pre;letter-spacing:-0.20px;">793372787V</div></div>
<div style="left:922px;top:532px;width:100px;height:28px;overflow:hidden"><div class="t" style="right:17px;top:15px;font-size:11px;line-height:11px;color:#000;white-space:pre;letter-spacing:1.19px;">-</div></div>
<div style="left:1124px;top:532px;width:100px;height:28px;overflow:hidden"><div class="t" style="right:17px;top:15px;font-size:11px;line-height:11px;color:#000;white-space:pre;letter-spacing:1.19px;">-</div></div>
<div style="left:1225px;top:532px;width:100px;height:28px;overflow:hidden"><div class="t" style="right:17px;top:15px;font-size:11px;line-height:11px;color:#000;white-space:pre;letter-spacing:1.19px;">-</div></div>
<div style="left:26px;top:561px;width:101px;height:28px;overflow:hidden"><div class="t" style="left:2px;top:17px;font-size:11px;line-height:11px;color:#000;white-space:pre;letter-spacing:-0.07px;">Dec20-133</div></div>
<div style="left:128px;top:561px;width:74px;height:28px;overflow:hidden"><div class="t" style="left:2px;top:17px;font-size:11px;line-height:11px;color:#000;white-space:pre;letter-spacing:-0.20px;">681064982V</div></div>
<div style="left:261px;top:561px;width:129px;height:28px;overflow:hidden"><div class="t" style="left:2px;top:17px;font-size:11px;line-height:11px;color:#000;white-space:pre;letter-spacing:-0.33px;">HMS Chandrasiri</div></div>
<div style="left:391px;top:561px;width:98px;height:28px;overflow:hidden"><div class="t" style="left:2px;top:17px;font-size:11px;line-height:11px;color:#000;white-space:pre;letter-spacing:-0.04px;">Labour-skill</div></div>
<div style="left:490px;top:561px;width:77px;height:28px;overflow:hidden"><div class="t" style="left:2px;top:17px;font-size:11px;line-height:11px;color:#000;white-space:pre;letter-spacing:0.02px;">Bridge - Nikaweratiya</div></div>
<div style="left:568px;top:561px;width:50px;height:28px;overflow:hidden"><div class="t" style="right:7px;top:17px;font-size:11px;line-height:11px;color:#000;white-space:pre;letter-spacing:0.19px;">1,100</div></div>
<div style="left:619px;top:561px;width:100px;height:28px;overflow:hidden"><div class="t" style="right:2px;top:17px;font-size:11px;line-height:11px;color:#000;white-space:pre;letter-spacing:0.25px;">0.00</div></div>
<div style="left:720px;top:561px;width:100px;height:28px;overflow:hidden"><div class="t" style="right:2px;top:17px;font-size:11px;line-height:11px;color:#000;white-space:pre;letter-spacing:0.22px;">28,884.38</div></div>
<div style="left:821px;top:561px;width:100px;height:28px;overflow:hidden"><div class="t" style="left:1px;top:17px;font-size:11px;line-height:11px;color:#000;white-space:pre;letter-spacing:-0.20px;">681064982V</div></div>
<div style="left:922px;top:561px;width:100px;height:28px;overflow:hidden"><div class="t" style="right:6px;top:17px;font-size:11px;line-height:11px;color:#000;white-space:pre;letter-spacing:0.22px;">28,885.00</div></div>
<div style="left:1124px;top:561px;width:100px;height:28px;overflow:hidden"><div class="t" style="right:17px;top:17px;font-size:11px;line-height:11px;color:#000;white-space:pre;letter-spacing:1.19px;">-</div></div>
<div style="left:1225px;top:561px;width:100px;height:28px;overflow:hidden"><div class="t" style="right:17px;top:17px;font-size:11px;line-height:11px;color:#000;white-space:pre;letter-spacing:1.19px;">-</div></div>
<div style="left:26px;top:590px;width:101px;height:28px;overflow:hidden"><div class="t" style="left:2px;top:17px;font-size:11px;line-height:11px;color:#000;white-space:pre;letter-spacing:-0.07px;">Dec20-134</div></div>
<div style="left:128px;top:590px;width:74px;height:28px;overflow:hidden"><div class="t" style="left:2px;top:17px;font-size:11px;line-height:11px;color:#000;white-space:pre;letter-spacing:-0.20px;">771582893V</div></div>
<div style="left:261px;top:590px;width:129px;height:28px;overflow:hidden"><div class="t" style="left:2px;top:17px;font-size:11px;line-height:11px;color:#000;white-space:pre;letter-spacing:-0.53px;">GGGS Bandara</div></div>
<div style="left:391px;top:590px;width:98px;height:28px;overflow:hidden"><div class="t" style="left:2px;top:17px;font-size:11px;line-height:11px;color:#000;white-space:pre;letter-spacing:-0.31px;">Mason</div></div>
<div style="left:490px;top:590px;width:77px;height:28px;overflow:hidden"><div class="t" style="left:2px;top:17px;font-size:11px;line-height:11px;color:#000;white-space:pre;letter-spacing:0.02px;">Bridge - Nikaweratiya</div></div>
<div style="left:568px;top:590px;width:50px;height:28px;overflow:hidden"><div class="t" style="right:7px;top:17px;font-size:11px;line-height:11px;color:#000;white-space:pre;letter-spacing:0.19px;">1,300</div></div>
<div style="left:619px;top:590px;width:100px;height:28px;overflow:hidden"><div class="t" style="right:2px;top:17px;font-size:11px;line-height:11px;color:#000;white-space:pre;letter-spacing:0.25px;">0.00</div></div>
<div style="left:720px;top:590px;width:100px;height:28px;overflow:hidden"><div class="t" style="right:2px;top:17px;font-size:11px;line-height:11px;color:#000;white-space:pre;letter-spacing:0.25px;">5,662.50</div></div>
<div style="left:821px;top:590px;width:100px;height:28px;overflow:hidden"><div class="t" style="left:1px;top:17px;font-size:11px;line-height:11px;color:#000;white-space:pre;letter-spacing:-0.20px;">771582893V</div></div>
<div style="left:922px;top:590px;width:100px;height:28px;overflow:hidden"><div class="t" style="right:6px;top:17px;font-size:11px;line-height:11px;color:#000;white-space:pre;letter-spacing:0.25px;">5,665.00</div></div>
<div style="left:1124px;top:590px;width:100px;height:28px;overflow:hidden"><div class="t" style="right:17px;top:17px;font-size:11px;line-height:11px;color:#000;white-space:pre;letter-spacing:1.19px;">-</div></div>
<div style="left:1225px;top:590px;width:100px;height:28px;overflow:hidden"><div class="t" style="right:17px;top:17px;font-size:11px;line-height:11px;color:#000;white-space:pre;letter-spacing:1.19px;">-</div></div>
<div style="left:26px;top:619px;width:101px;height:28px;overflow:hidden"><div class="t" style="left:2px;top:17px;font-size:11px;line-height:11px;color:#000;white-space:pre;letter-spacing:-0.07px;">Nov20-007</div></div>
<div style="left:128px;top:619px;width:74px;height:28px;overflow:hidden"><div class="t" style="left:2px;top:17px;font-size:11px;line-height:11px;color:#000;white-space:pre;letter-spacing:-0.20px;">782493876V</div></div>
<div style="left:261px;top:619px;width:129px;height:28px;overflow:hidden"><div class="t" style="left:2px;top:17px;font-size:11px;line-height:11px;color:#000;white-space:pre;letter-spacing:-0.45px;">SPDL Senadeera</div></div>
<div style="left:391px;top:619px;width:98px;height:28px;overflow:hidden"><div class="t" style="left:2px;top:17px;font-size:11px;line-height:11px;color:#000;white-space:pre;letter-spacing:-0.26px;">Labour</div></div>
<div style="left:490px;top:619px;width:77px;height:28px;overflow:hidden"><div class="t" style="left:2px;top:17px;font-size:11px;line-height:11px;color:#000;white-space:pre;letter-spacing:0.02px;">Bridge - Nikaweratiya</div></div>
<div style="left:568px;top:619px;width:50px;height:28px;overflow:hidden"><div class="t" style="right:7px;top:17px;font-size:11px;line-height:11px;color:#000;white-space:pre;letter-spacing:-0.06px;">900</div></div>
<div style="left:619px;top:619px;width:100px;height:28px;overflow:hidden"><div class="t" style="right:2px;top:17px;font-size:11px;line-height:11px;color:#000;white-space:pre;letter-spacing:0.25px;">0.00</div></div>
<div style="left:720px;top:619px;width:100px;height:28px;overflow:hidden"><div class="t" style="right:2px;top:17px;font-size:11px;line-height:11px;color:#000;white-space:pre;letter-spacing:0.30px;">-300.00</div></div>
<div style="left:821px;top:619px;width:100px;height:28px;overflow:hidden"><div class="t" style="left:1px;top:17px;font-size:11px;line-height:11px;color:#000;white-space:pre;letter-spacing:-0.20px;">782493876V</div></div>
<div style="left:922px;top:619px;width:100px;height:28px;overflow:hidden"><div class="t" style="right:2px;top:17px;font-size:11px;line-height:11px;color:#000;white-space:pre;letter-spacing:0.41px;">(300.00)</div></div>
<div style="left:1124px;top:619px;width:100px;height:28px;overflow:hidden"><div class="t" style="right:17px;top:17px;font-size:11px;line-height:11px;color:#000;white-space:pre;letter-spacing:1.19px;">-</div></div>
<div style="left:1225px;top:619px;width:100px;height:28px;overflow:hidden"><div class="t" style="right:17px;top:17px;font-size:11px;line-height:11px;color:#000;white-space:pre;letter-spacing:1.19px;">-</div></div>
<div style="left:26px;top:648px;width:101px;height:28px;overflow:hidden"><div class="t" style="left:2px;top:17px;font-size:11px;line-height:11px;color:#000;white-space:pre;letter-spacing:-0.07px;">Nov20-008</div></div>
<div style="left:128px;top:648px;width:74px;height:28px;overflow:hidden"><div class="t" style="right:3px;top:17px;font-size:11px;line-height:11px;color:#000;white-space:pre;letter-spacing:0.04px;">2.00122E+11</div></div>
<div style="left:261px;top:648px;width:129px;height:28px;overflow:hidden"><div class="t" style="left:2px;top:17px;font-size:11px;line-height:11px;color:#000;white-space:pre;letter-spacing:-0.43px;">PGIS Wijerathna</div></div>
<div style="left:391px;top:648px;width:98px;height:28px;overflow:hidden"><div class="t" style="left:2px;top:17px;font-size:11px;line-height:11px;color:#000;white-space:pre;letter-spacing:-0.26px;">Labour</div></div>
<div style="left:490px;top:648px;width:77px;height:28px;overflow:hidden"><div class="t" style="left:2px;top:17px;font-size:11px;line-height:11px;color:#000;white-space:pre;letter-spacing:0.02px;">Bridge - Nikaweratiya</div></div>
<div style="left:568px;top:648px;width:50px;height:28px;overflow:hidden"><div class="t" style="right:7px;top:17px;font-size:11px;line-height:11px;color:#000;white-space:pre;letter-spacing:-0.06px;">900</div></div>
<div style="left:619px;top:648px;width:100px;height:28px;overflow:hidden"><div class="t" style="right:2px;top:17px;font-size:11px;line-height:11px;color:#000;white-space:pre;letter-spacing:0.25px;">0.00</div></div>
<div style="left:720px;top:648px;width:100px;height:28px;overflow:hidden"><div class="t" style="right:2px;top:17px;font-size:11px;line-height:11px;color:#000;white-space:pre;letter-spacing:0.30px;">-300.00</div></div>
<div style="left:821px;top:648px;width:100px;height:28px;overflow:hidden"><div class="t" style="left:1px;top:17px;font-size:11px;line-height:11px;color:#000;white-space:pre;letter-spacing:0.04px;">2.00122E+11</div></div>
<div style="left:922px;top:648px;width:100px;height:28px;overflow:hidden"><div class="t" style="right:2px;top:17px;font-size:11px;line-height:11px;color:#000;white-space:pre;letter-spacing:0.41px;">(300.00)</div></div>
<div style="left:1124px;top:648px;width:100px;height:28px;overflow:hidden"><div class="t" style="right:17px;top:17px;font-size:11px;line-height:11px;color:#000;white-space:pre;letter-spacing:1.19px;">-</div></div>
<div style="left:1225px;top:648px;width:100px;height:28px;overflow:hidden"><div class="t" style="right:17px;top:17px;font-size:11px;line-height:11px;color:#000;white-space:pre;letter-spacing:1.19px;">-</div></div>
<svg style="left:147px;top:124px" width="8" height="5" viewBox="0 0 8 5"><path d="M0 0H7L3.5 4Z" fill="#333"/></svg>
<div style="left:160px;top:115px;width:85px;height:20px;background:linear-gradient(#e6e9ee,#dde1e7);border:1px solid #a9b0ba;border-right:1px solid #b9c0c9;border-radius:10px 0 0 10px"></div>
<div style="left:166px;top:120px;width:9px;height:9px;border-radius:5px;background:radial-gradient(circle at 50% 35%,#f4f5f7,#c3c8cf)"></div>
<div class="t" style="left:226px;top:117px;font-family:'Liberation Serif',serif;font-style:italic;font-weight:bold;font-size:14px;line-height:14px;color:#333">f<span style="font-size:11px">x</span></div>
<div style="left:1349px;top:115px;width:17px;height:20px;background:linear-gradient(#eef0f3,#dfe3e8);border-left:1px solid #b9c0c9"></div>
<svg style="left:1352px;top:121px" width="10" height="8" viewBox="0 0 10 8"><path d="M1 1L5 5L9 1" stroke="#555" stroke-width="2" fill="none"/></svg>
<div style="left:1346px;top:140px;width:20px;height:536px;background:linear-gradient(90deg,#d9dee5,#e3e7ec 50%,#dde2e8)"></div>
<div style="left:1362px;top:140px;width:4px;height:552px;background:#eef1f4;border-left:1px solid #c3c9d1"></div>
<div style="left:1347px;top:141px;width:14px;height:16px;background:linear-gradient(#fdfdfe,#e8ebef);border:1px solid #aab2bc;border-radius:2px"></div>
<svg style="left:1349px;top:146px" width="10" height="6" viewBox="0 0 10 6"><path d="M0.5 5.5L5 0.5L9.5 5.5Z" fill="#4a4a4a"/></svg>
<div style="left:1347px;top:172px;width:14px;height:16px;background:linear-gradient(#fdfdfe,#e8ebef);border:1px solid #aab2bc;border-radius:2px"></div>
<svg style="left:1350px;top:176px" width="8" height="8" viewBox="0 0 8 8"><path d="M0 0.5H8M0 2.5H8M0 4.5H8M0 6.5H8" stroke="#666"/></svg>
<div style="left:1347px;top:659px;width:14px;height:17px;background:linear-gradient(#fdfdfe,#e8ebef);border:1px solid #aab2bc;border-radius:2px"></div>
<svg style="left:1349px;top:665px" width="10" height="6" viewBox="0 0 10 6"><path d="M0.5 0.5L5 5.5L9.5 0.5Z" fill="#4a4a4a"/></svg>
<div style="left:0px;top:676px;width:1366px;height:16px;background:linear-gradient(#e4e8ed,#dde1e7)"></div>
<div style="left:0px;top:676px;width:1346px;height:1px;background:#a9b0b8"></div>
<div style="left:0px;top:691px;width:1366px;height:1px;background:#a0a7b0"></div>
<svg style="left:4px;top:679px" width="56" height="10" viewBox="0 0 56 10"><path d="M2 1V8" stroke="#555" stroke-width="1.5"/><path d="M7 1V8L3 4.5Z" fill="#555"/><path d="M23 1V8L19 4.5Z" fill="#555"/><path d="M32 1V8L36 4.5Z" fill="#555"/><path d="M47 1V8L51 4.5Z" fill="#555"/><path d="M52 1V8" stroke="#555" stroke-width="1.5"/></svg>
<div style="left:62px;top:677px;width:1px;height:14px;background:#b5bcc5"></div>
<svg style="left:0;top:0" width="0" height="0"><defs><linearGradient id="tg" x1="0" y1="0" x2="0" y2="1"><stop offset="0" stop-color="#eef1f4"/><stop offset="1" stop-color="#d8dde4"/></linearGradient></defs></svg>
<svg style="left:0px;top:0px" width="1366" height="708"><path d="M62.5 676.5 L62.5 690.5 L148.5 690.5 L150.5 676.5 Z" fill="url(#tg)" stroke="#9aa3ae"/></svg>
<svg style="left:0px;top:0px" width="1366" height="708"><path d="M138.5 690.5 L150.5 676.5 L267.5 676.5 L267.5 690.5 Z" fill="url(#tg)" stroke="#9aa3ae"/></svg>
<svg style="left:0px;top:0px" width="1366" height="708"><path d="M267.5 676.5 L267.5 690.5 L411.5 690.5 L422.5 676.5 Z" fill="#ffffff" stroke="#9aa3ae"/></svg>
<div style="left:268px;top:676px;width:152px;height:1px;background:#ffffff"></div>
<svg style="left:0px;top:0px" width="1366" height="708"><path d="M411.5 690.5 L422.5 676.5 L518.5 676.5 L507.5 690.5 Z" fill="url(#tg)" stroke="#9aa3ae"/></svg>
<svg style="left:0px;top:0px" width="1366" height="708"><path d="M507.5 690.5 L518.5 676.5 L578.5 676.5 L567.5 690.5 Z" fill="url(#tg)" stroke="#9aa3ae"/></svg>
<svg style="left:0px;top:0px" width="1366" height="708"><path d="M567.5 690.5 L578.5 676.5 L619.5 676.5 L607.5 690.5 Z" fill="url(#tg)" stroke="#9aa3ae"/></svg>
<svg style="left:0px;top:0px" width="1366" height="708"><path d="M607.5 690.5 L619.5 676.5 L651.5 676.5 L638.5 690.5 Z" fill="url(#tg)" stroke="#9aa3ae"/></svg>
<div class="t" style="left:50.0px;top:680px;width:100px;text-align:center;font-size:11.5px;line-height:11.5px;color:#444a55;font-weight:normal;white-space:pre;">Summary</div>
<div class="t" style="left:135.0px;top:679px;width:140px;text-align:center;font-size:12.0px;line-height:12.0px;color:#444a55;font-weight:normal;white-space:pre;">Staff Salary Sheet</div>
<div class="t" style="left:262.0px;top:679px;width:160px;text-align:center;font-size:12.5px;line-height:12.5px;color:#222;font-weight:bold;white-space:pre;">Bridge - Nikaweratiya</div>
<div class="t" style="left:411.0px;top:680px;width:100px;text-align:center;font-size:11.5px;line-height:11.5px;color:#444a55;font-weight:normal;white-space:pre;">Driver Salary</div>
<div class="t" style="left:489.0px;top:680px;width:100px;text-align:center;font-size:11.5px;line-height:11.5px;color:#444a55;font-weight:normal;white-space:pre;">Safety</div>
<div class="t" style="left:560.0px;top:680px;width:60px;text-align:center;font-size:11.5px;line-height:11.5px;color:#444a55;font-weight:normal;white-space:pre;">Lab</div>
<svg style="left:620px;top:678px" width="15" height="12" viewBox="0 0 15 12"><rect x="2.5" y="3.5" width="11" height="7" fill="#fff" stroke="#6d7b8d"/><path d="M4 1L5 4L2 3L5 5L3 7L6 6L7 8L7 5L10 5L7 4L8 1L6 3Z" fill="#f2b233"/></svg>
<div style="left:808px;top:677px;width:1px;height:14px;background:#b5bcc5"></div>
<div style="left:810px;top:677px;width:7px;height:14px;background:linear-gradient(90deg,#fdfdfe,#e2e6eb);border:1px solid #98a1ab"></div>
<svg style="left:821px;top:680px" width="6" height="9" viewBox="0 0 6 9"><path d="M5.5 0.5V8.5L0.5 4.5Z" fill="#444"/></svg>
<div style="left:835px;top:677px;width:18px;height:14px;background:linear-gradient(#fdfdfe,#e8ebef);border:1px solid #aab2bc;border-radius:2px"></div>
<svg style="left:840px;top:680px" width="8" height="8" viewBox="0 0 8 8"><path d="M0.5 0V8M2.5 0V8M4.5 0V8M6.5 0V8" stroke="#666"/></svg>
<svg style="left:1334px;top:680px" width="6" height="9" viewBox="0 0 6 9"><path d="M0.5 0.5V8.5L5.5 4.5Z" fill="#444"/></svg>
<div style="left:1346px;top:676px;width:16px;height:16px;background:#dde1e7;border-left:1px solid #c3c9d1"></div>
<div style="left:0px;top:692px;width:1366px;height:16px;background:linear-gradient(#dfe4ea,#cfd5dd)"></div>
<div class="t" style="left:8px;top:697px;font-size:11px;line-height:11px;color:#3c4453;font-weight:normal;white-space:pre;">Ready</div>
<div class="t" style="left:55px;top:697px;font-size:11px;line-height:11px;color:#3c4453;font-weight:normal;white-space:pre;">Circular References: U83</div>
<div style="left:188px;top:693px;width:1px;height:15px;background:#aab1bb"></div>
<div style="left:1124px;top:693px;width:1px;height:15px;background:#aab1bb"></div>
<div style="left:1129px;top:694px;width:19px;height:14px;background:linear-gradient(#fde7a5,#fbd26a);border:1px solid #e3b04a;border-radius:2px"></div>
<svg style="left:1132px;top:697px" width="13" height="11" viewBox="0 0 13 11"><path d="M0.5 0.5H12.5V10.5H0.5Z M0.5 3.5H12.5M0.5 6.5H12.5M4.5 0.5V10.5M8.5 0.5V10.5" stroke="#555" fill="#fff"/></svg>
<svg style="left:1150px;top:696px" width="15" height="12" viewBox="0 0 15 12"><rect x="0.5" y="0.5" width="14" height="11" fill="#c7ccd3" stroke="#666"/><rect x="3.5" y="2.5" width="8" height="9" fill="#fff" stroke="#666"/><path d="M5 5H10M5 7H10M5 9H10" stroke="#888"/></svg>
<svg style="left:1169px;top:696px" width="15" height="12" viewBox="0 0 15 12"><rect x="0.5" y="0.5" width="14" height="11" fill="#8a9099" stroke="#666"/><rect x="2.5" y="1.5" width="4" height="7" fill="#fff"/><rect x="8.5" y="1.5" width="4" height="7" fill="#fff"/></svg>
<div class="t" style="left:1195px;top:697px;font-size:11px;line-height:11px;color:#3c4453;font-weight:normal;white-space:pre;">100%</div>
<svg style="left:1229px;top:693px" width="125" height="15" viewBox="0 0 125 15"><circle cx="9" cy="8" r="7" fill="#f3f4f6" stroke="#7d848e"/><path d="M5 8H13" stroke="#444" stroke-width="2"/>
<path d="M16 8.5H118" stroke="#8f96a0"/><path d="M16 9.5H118" stroke="#f5f6f8"/>
<path d="M63.5 2.5H71.5V11.5L67.5 14.5L63.5 11.5Z" fill="#fafbfc" stroke="#6f7780"/></svg>
<div style="left:1345px;top:693px;width:16px;height:16px;border-radius:8px;background:#f3f4f6;border:1px solid #7d848e"></div>
<svg style="left:1349px;top:697px" width="9" height="9" viewBox="0 0 9 9"><path d="M0 4.5H8M4 0.5V8.5" stroke="#444" stroke-width="2"/></svg>
</body></html>
